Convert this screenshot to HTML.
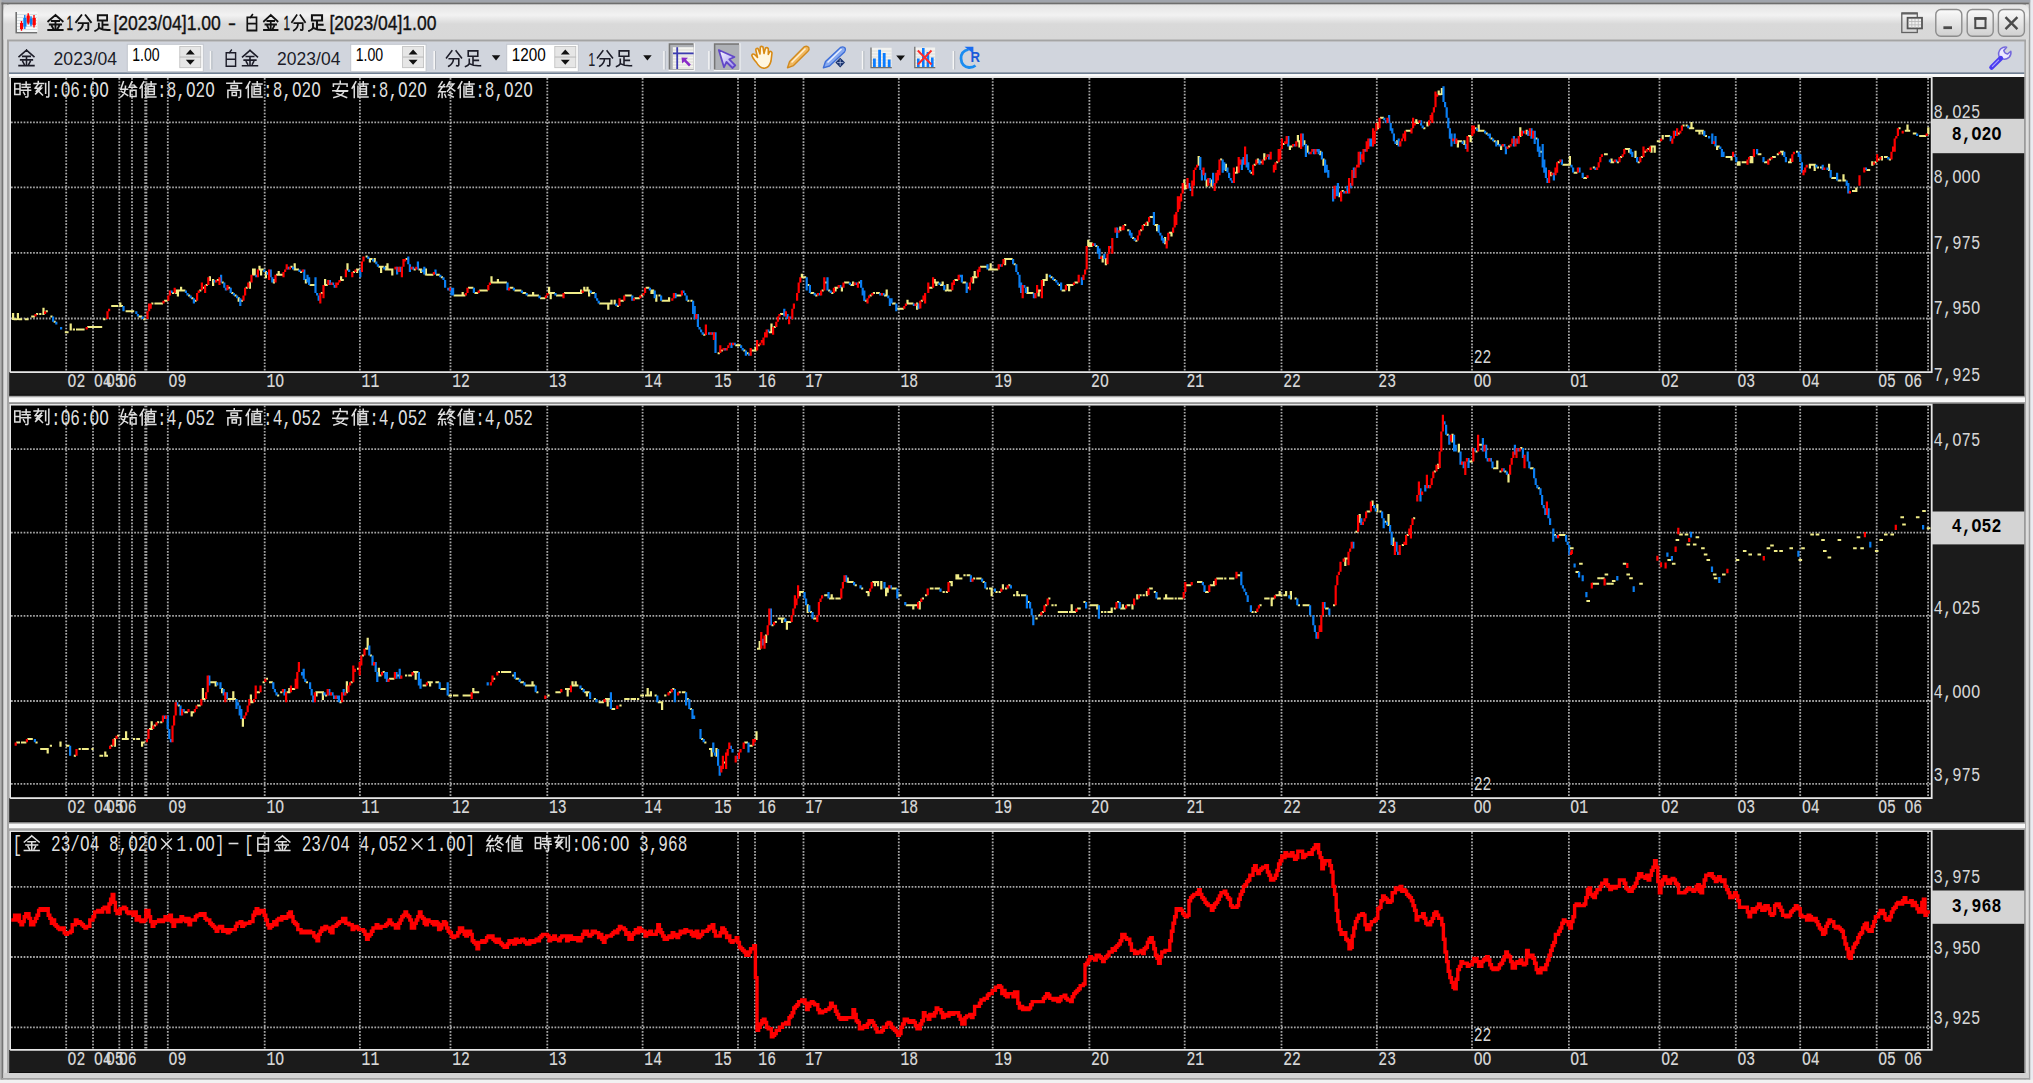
<!DOCTYPE html>
<html><head><meta charset="utf-8"><title>chart</title>
<style>html,body{margin:0;padding:0;width:2033px;height:1083px;overflow:hidden;background:#c8c8c8;font-family:"Liberation Sans",sans-serif;}</style>
</head><body>
<svg width="2033" height="1083" viewBox="0 0 2033 1083" style="display:block">
<defs>
<linearGradient id="tg" x1="0" y1="0" x2="0" y2="1"><stop offset="0" stop-color="#f6f6f6"/><stop offset="0.45" stop-color="#ececec"/><stop offset="1" stop-color="#d9d9d9"/></linearGradient>
<linearGradient id="bg" x1="0" y1="0" x2="0" y2="1"><stop offset="0" stop-color="#fbfbfb"/><stop offset="1" stop-color="#cfcfcf"/></linearGradient>
<linearGradient id="pg" x1="0" y1="0" x2="1" y2="1"><stop offset="0" stop-color="#ffffff"/><stop offset="1" stop-color="#9a8cf0"/></linearGradient>
</defs>
<rect x="0" y="0" width="2033" height="1083" fill="#c8c8c8"/>
<rect x="0" y="0" width="2033" height="2.5" fill="#a0a4ac"/>
<rect x="0" y="0" width="1.5" height="1083" fill="#b0b0b0"/>
<rect x="1.5" y="2.5" width="2" height="1079" fill="#747474"/>
<rect x="1.5" y="2.5" width="2028" height="2" fill="#6e6e6e"/>
<rect x="3.5" y="4.5" width="3.5" height="1075" fill="#dcdcdc"/>
<rect x="7" y="40" width="2" height="1040" fill="#a6a6a6"/>
<rect x="2024.2" y="40" width="1.8" height="1042" fill="#a8a8a8"/>
<rect x="2026" y="4.5" width="2.8" height="1078" fill="#dcdcdc"/>
<rect x="2028.8" y="2.5" width="1.6" height="1080" fill="#a0a0a0"/>
<rect x="2030.4" y="0" width="2.6" height="1083" fill="#e8ebf0"/>
<rect x="3.5" y="1073" width="2025" height="5" fill="#d2d2d2"/>
<rect x="2" y="1078" width="2028" height="1.8" fill="#a0a0a0"/>
<rect x="0" y="1079.8" width="2033" height="3.2" fill="#f2f2f2"/>
<linearGradient id="tg2" x1="0" y1="4.5" x2="0" y2="40" gradientUnits="userSpaceOnUse"><stop offset="0" stop-color="#e4e4e4"/><stop offset="0.3" stop-color="#f2f2f2"/><stop offset="0.55" stop-color="#d9d9d9"/><stop offset="0.96" stop-color="#d8d8d8"/><stop offset="1" stop-color="#e0e0e0"/></linearGradient>
<path d="M3.5,39.5 V11 Q3.5,4.5 10,4.5 H2022 Q2028.8,4.5 2028.8,11 V39.5 Z" fill="url(#tg2)"/>
<rect x="7" y="39.6" width="2019" height="2" fill="#a4a4a4"/>
<rect x="15.5" y="11.6" width="22" height="22" fill="#f6f8f8"/>
<line x1="17" y1="14.5" x2="37" y2="14.5" stroke="#d6dde0" stroke-width="1"/>
<line x1="17" y1="17.5" x2="37" y2="17.5" stroke="#d6dde0" stroke-width="1"/>
<line x1="17" y1="20.5" x2="37" y2="20.5" stroke="#d6dde0" stroke-width="1"/>
<line x1="17" y1="23.5" x2="37" y2="23.5" stroke="#d6dde0" stroke-width="1"/>
<line x1="17" y1="26.5" x2="37" y2="26.5" stroke="#d6dde0" stroke-width="1"/>
<line x1="17" y1="29.5" x2="37" y2="29.5" stroke="#d6dde0" stroke-width="1"/>
<path d="M16.2,12 V32.8 H37.2" fill="none" stroke="#707070" stroke-width="1.6"/>
<path d="M21.5,21 V30.7 M28.2,13.3 V24.6 M34,15 V27.4" stroke="#ff0000" stroke-width="1.4"/>
<path d="M24.8,15 V29 M31,16.3 V26.3" stroke="#0a7ef0" stroke-width="1.4"/>
<path d="M20,23 h3.2 v6 h-3.2z M26.6,15.5 h3.2 v7.2 h-3.2z M32.4,18 h3.4 v7.2 h-3.4z" fill="#ff0000"/>
<path d="M23.3,18 h3.2 v8.5 h-3.2z M29.7,18.5 h2.7 v6 h-2.7z" fill="#0a7ef0"/>
<path transform="translate(47.2,14.2) scale(1.031,1.050)" d="M8,0.8 L1,6.8 M8,0.8 L15,6.8 M4.5,6.5 H11.5 M2.5,9.8 H13.5 M1,15 H15 M8,6.5 V15 M4.5,11.3 L5.8,13.6 M11.5,11.3 L10.2,13.6" fill="none" stroke="#111111" stroke-width="1.80" stroke-linecap="square"/>
<text x="66.5" y="29.5" font-family="Liberation Sans" font-size="19.5" font-weight="normal" fill="#111111" textLength="6.5" lengthAdjust="spacingAndGlyphs" stroke="#111111" stroke-width="0.35">1</text>
<path transform="translate(75,14.2) scale(1.062,1.050)" d="M6,1 L1,7.5 M10,1 L15,7.5 M3.5,8.5 H12.5 V14 Q12.5,15.5 10.5,15 M7.5,8.5 Q7.5,13 3,15.5" fill="none" stroke="#111111" stroke-width="1.80" stroke-linecap="square"/>
<path transform="translate(94.2,14.2) scale(1.031,1.050)" d="M3.5,1 H12.5 V6 H3.5 Z M8,6 V14 M8,10 H13 M4.5,9 V13 Q3.5,15 1,15.8 M4.5,13 Q9,15.5 15,15" fill="none" stroke="#111111" stroke-width="1.80" stroke-linecap="square"/>
<text x="113.4" y="29.8" font-family="Liberation Sans" font-size="19.5" font-weight="normal" fill="#111111" textLength="107.5" lengthAdjust="spacingAndGlyphs" stroke="#111111" stroke-width="0.35">[2023/04]1.00</text>
<text x="228" y="29.5" font-family="Liberation Sans" font-size="19.5" font-weight="normal" fill="#111111" textLength="8" lengthAdjust="spacingAndGlyphs" stroke="#111111" stroke-width="0.35">-</text>
<path transform="translate(244.5,14.2) scale(0.925,1.050)" d="M8.5,0.5 L6.5,3 M3,3 H13 V15.5 H3 Z M3,9 H13" fill="none" stroke="#111111" stroke-width="1.80" stroke-linecap="square"/>
<path transform="translate(263,14.2) scale(0.969,1.050)" d="M8,0.8 L1,6.8 M8,0.8 L15,6.8 M4.5,6.5 H11.5 M2.5,9.8 H13.5 M1,15 H15 M8,6.5 V15 M4.5,11.3 L5.8,13.6 M11.5,11.3 L10.2,13.6" fill="none" stroke="#111111" stroke-width="1.80" stroke-linecap="square"/>
<text x="283.5" y="29.5" font-family="Liberation Sans" font-size="19.5" font-weight="normal" fill="#111111" textLength="6.5" lengthAdjust="spacingAndGlyphs" stroke="#111111" stroke-width="0.35">1</text>
<path transform="translate(291,14.2) scale(0.938,1.050)" d="M6,1 L1,7.5 M10,1 L15,7.5 M3.5,8.5 H12.5 V14 Q12.5,15.5 10.5,15 M7.5,8.5 Q7.5,13 3,15.5" fill="none" stroke="#111111" stroke-width="1.80" stroke-linecap="square"/>
<path transform="translate(308,14.2) scale(1.125,1.050)" d="M3.5,1 H12.5 V6 H3.5 Z M8,6 V14 M8,10 H13 M4.5,9 V13 Q3.5,15 1,15.8 M4.5,13 Q9,15.5 15,15" fill="none" stroke="#111111" stroke-width="1.80" stroke-linecap="square"/>
<text x="329.4" y="29.8" font-family="Liberation Sans" font-size="19.5" font-weight="normal" fill="#111111" textLength="107" lengthAdjust="spacingAndGlyphs" stroke="#111111" stroke-width="0.35">[2023/04]1.00</text>
<g fill="none" stroke="#626262">
<rect x="1901.8" y="13" width="15.5" height="19.5" stroke-width="1.3"/><line x1="1901.8" y1="13.5" x2="1917.3" y2="13.5" stroke-width="2"/>
</g>
<rect x="1907.6" y="17.8" width="14.4" height="10.6" fill="#f0f0f0" stroke="#555" stroke-width="1.8"/>
<path d="M1908.5,21.5 H1921 M1908.5,24.8 H1921 M1911.8,19 V28 M1915,19 V28 M1918.3,19 V28" stroke="#b8b8b8" stroke-width="0.8"/>
<rect x="1935.8" y="9.5" width="26" height="26.8" rx="5" fill="url(#bg)" stroke="#8c8c8c" stroke-width="1.4"/>
<rect x="1967.2" y="9.5" width="26" height="26.8" rx="5" fill="url(#bg)" stroke="#8c8c8c" stroke-width="1.4"/>
<rect x="1998.4" y="9.5" width="26" height="26.8" rx="5" fill="url(#bg)" stroke="#8c8c8c" stroke-width="1.4"/>
<rect x="1943.4" y="26.3" width="8.6" height="2.8" fill="#4a4a4a"/>
<rect x="1975.3" y="18.3" width="10.2" height="9.8" fill="none" stroke="#4a4a4a" stroke-width="2"/><rect x="1974.4" y="17.2" width="12" height="2.6" fill="#4a4a4a"/>
<path d="M2005.5,17.2 L2017.4,29.2 M2017.4,17.2 L2005.5,29.2" stroke="#4a4a4a" stroke-width="2.4"/>
<rect x="9" y="41.6" width="2015.2" height="31" fill="#d1d5dd"/>
<rect x="9" y="72.4" width="2015.2" height="1.6" fill="#6f7f92"/>
<rect x="9" y="74" width="2015.2" height="3" fill="#fbfbfb"/>
<path transform="translate(18,49.2) scale(1.062,1.094)" d="M8,0.8 L1,6.8 M8,0.8 L15,6.8 M4.5,6.5 H11.5 M2.5,9.8 H13.5 M1,15 H15 M8,6.5 V15 M4.5,11.3 L5.8,13.6 M11.5,11.3 L10.2,13.6" fill="none" stroke="#1c1c28" stroke-width="1.50" stroke-linecap="square"/>
<text x="53.6" y="65.2" font-family="Liberation Sans" font-size="18.5" font-weight="normal" fill="#1c1c28" textLength="63.5" lengthAdjust="spacingAndGlyphs">2023/04</text>
<rect x="127.3" y="44.3" width="76" height="27.4" fill="#ffffff" stroke="#c2c6ce" stroke-width="1"/>
<rect x="179.8" y="46.5" width="21" height="10.5" fill="#e6e6e6" stroke="#bdbdbd" stroke-width="0.8"/>
<rect x="179.8" y="57.2" width="21" height="10.5" fill="#e6e6e6" stroke="#bdbdbd" stroke-width="0.8"/>
<path d="M185.8,54.6 L190.3,49.6 L194.8,54.6 Z M185.8,59.8 L190.3,64.8 L194.8,59.8 Z" fill="#111"/>
<text x="132.3" y="61.4" font-family="Liberation Sans" font-size="18" font-weight="normal" fill="#000" textLength="27.4" lengthAdjust="spacingAndGlyphs">1.00</text>
<rect x="209.8" y="51" width="1.6" height="18.5" fill="#f6f6f6"/><rect x="211.4" y="51" width="1" height="18.5" fill="#b4b8c0"/>
<path transform="translate(223.4,49.5) scale(0.938,1.081)" d="M8.5,0.5 L6.5,3 M3,3 H13 V15.5 H3 Z M3,9 H13" fill="none" stroke="#1c1c28" stroke-width="1.50" stroke-linecap="square"/>
<path transform="translate(241.5,49.5) scale(1.062,1.081)" d="M8,0.8 L1,6.8 M8,0.8 L15,6.8 M4.5,6.5 H11.5 M2.5,9.8 H13.5 M1,15 H15 M8,6.5 V15 M4.5,11.3 L5.8,13.6 M11.5,11.3 L10.2,13.6" fill="none" stroke="#1c1c28" stroke-width="1.50" stroke-linecap="square"/>
<text x="277.1" y="65.2" font-family="Liberation Sans" font-size="18.5" font-weight="normal" fill="#1c1c28" textLength="63.3" lengthAdjust="spacingAndGlyphs">2023/04</text>
<rect x="350.7" y="44.3" width="75.4" height="27.4" fill="#ffffff" stroke="#c2c6ce" stroke-width="1"/>
<rect x="402.6" y="46.5" width="21" height="10.5" fill="#e6e6e6" stroke="#bdbdbd" stroke-width="0.8"/>
<rect x="402.6" y="57.2" width="21" height="10.5" fill="#e6e6e6" stroke="#bdbdbd" stroke-width="0.8"/>
<path d="M408.6,54.6 L413.1,49.6 L417.6,54.6 Z M408.6,59.8 L413.1,64.8 L417.6,59.8 Z" fill="#111"/>
<text x="355.7" y="61.4" font-family="Liberation Sans" font-size="18" font-weight="normal" fill="#000" textLength="27.5" lengthAdjust="spacingAndGlyphs">1.00</text>
<rect x="433.4" y="51" width="1.6" height="18.5" fill="#f6f6f6"/><rect x="435" y="51" width="1" height="18.5" fill="#b4b8c0"/>
<path transform="translate(445.5,49.8) scale(1.062,1.062)" d="M6,1 L1,7.5 M10,1 L15,7.5 M3.5,8.5 H12.5 V14 Q12.5,15.5 10.5,15 M7.5,8.5 Q7.5,13 3,15.5" fill="none" stroke="#1c1c28" stroke-width="1.50" stroke-linecap="square"/>
<path transform="translate(464.5,49.8) scale(1.062,1.062)" d="M3.5,1 H12.5 V6 H3.5 Z M8,6 V14 M8,10 H13 M4.5,9 V13 Q3.5,15 1,15.8 M4.5,13 Q9,15.5 15,15" fill="none" stroke="#1c1c28" stroke-width="1.50" stroke-linecap="square"/>
<path d="M491.8,55.2 H500.3 L496,60.5 Z" fill="#111"/>
<rect x="506.7" y="44.3" width="71.6" height="27.4" fill="#ffffff" stroke="#c2c6ce" stroke-width="1"/>
<rect x="554.8" y="46.5" width="21" height="10.5" fill="#e6e6e6" stroke="#bdbdbd" stroke-width="0.8"/>
<rect x="554.8" y="57.2" width="21" height="10.5" fill="#e6e6e6" stroke="#bdbdbd" stroke-width="0.8"/>
<path d="M560.8,54.6 L565.3,49.6 L569.8,54.6 Z M560.8,59.8 L565.3,64.8 L569.8,59.8 Z" fill="#111"/>
<text x="511.7" y="61.4" font-family="Liberation Sans" font-size="18" font-weight="normal" fill="#000" textLength="34" lengthAdjust="spacingAndGlyphs">1200</text>
<text x="588.2" y="65.5" font-family="Liberation Sans" font-size="18.5" font-weight="normal" fill="#1c1c28" textLength="7" lengthAdjust="spacingAndGlyphs">1</text>
<path transform="translate(596.5,49.8) scale(1.062,1.062)" d="M6,1 L1,7.5 M10,1 L15,7.5 M3.5,8.5 H12.5 V14 Q12.5,15.5 10.5,15 M7.5,8.5 Q7.5,13 3,15.5" fill="none" stroke="#1c1c28" stroke-width="1.50" stroke-linecap="square"/>
<path transform="translate(615.5,49.8) scale(1.062,1.062)" d="M3.5,1 H12.5 V6 H3.5 Z M8,6 V14 M8,10 H13 M4.5,9 V13 Q3.5,15 1,15.8 M4.5,13 Q9,15.5 15,15" fill="none" stroke="#1c1c28" stroke-width="1.50" stroke-linecap="square"/>
<path d="M643.2,55.2 H651.7 L647.4,60.5 Z" fill="#111"/>
<rect x="663.2" y="51" width="1.6" height="18.5" fill="#f6f6f6"/><rect x="664.8" y="51" width="1" height="18.5" fill="#b4b8c0"/>
<rect x="668.6" y="43.2" width="26.2" height="27.6" fill="#ffffff"/>
<rect x="668.6" y="43.2" width="25" height="26.4" fill="#767676"/>
<rect x="670.2" y="44.8" width="23.4" height="24.8" fill="#aeb1b6"/>
<rect x="672.8" y="47.2" width="20.8" height="21.8" fill="#f4f4f0"/>
<line x1="673" y1="50" x2="693.5" y2="50" stroke="#d4d4cc" stroke-width="0.8"/>
<line x1="673" y1="53" x2="693.5" y2="53" stroke="#d4d4cc" stroke-width="0.8"/>
<line x1="673" y1="56" x2="693.5" y2="56" stroke="#d4d4cc" stroke-width="0.8"/>
<line x1="673" y1="59" x2="693.5" y2="59" stroke="#d4d4cc" stroke-width="0.8"/>
<line x1="673" y1="62" x2="693.5" y2="62" stroke="#d4d4cc" stroke-width="0.8"/>
<line x1="673" y1="65" x2="693.5" y2="65" stroke="#d4d4cc" stroke-width="0.8"/>
<line x1="673" y1="68" x2="693.5" y2="68" stroke="#d4d4cc" stroke-width="0.8"/>
<rect x="676.3" y="47.2" width="1.8" height="21.8" fill="#3c3cb0"/><rect x="673" y="52.5" width="20.6" height="1.8" fill="#3c3cb0"/>
<path d="M681.5,57.5 L688,57.8 L686,59.8 L690.8,64.6 L689,66.4 L684.2,61.6 L682.2,63.6 Z" fill="#8a2ac8"/>
<rect x="708.2" y="51" width="1.6" height="18.5" fill="#f6f6f6"/><rect x="709.8" y="51" width="1" height="18.5" fill="#b4b8c0"/>
<rect x="713.8" y="43.2" width="26.6" height="27.6" fill="#ffffff"/>
<rect x="713.8" y="43.2" width="25.4" height="26.4" fill="#767676"/>
<rect x="715.4" y="44.8" width="23.8" height="24.8" fill="#aeb1b6"/>
<path d="M718.8,50 L734.5,57 L729.3,59.3 L735.3,65.3 L732.5,68 L726.5,62 L724,67.2 Z" fill="url(#pg)" stroke="#6248c8" stroke-width="1.8" stroke-linejoin="round"/>
<path d="M756.5,62.5 Q752.5,58 751.8,55.2 Q752.5,53 755,54.8 L757.5,57.5 L755.8,50 Q755.8,48 758,48.5 L760,54 L760.3,47 Q761.3,45.8 763,47 L764,53.5 L765.5,48 Q767,47 768.3,48.5 L768.3,54.5 L769.8,51.5 Q771.5,51 772,53 L771,61 Q769.5,67.5 764.5,68.2 Q759.5,68.2 756.5,62.5 Z" fill="#fff6e0" stroke="#d88a14" stroke-width="1.6" stroke-linejoin="round"/>
<path d="M787.5,67.8 L789.6,61.5 L804.5,46.6 Q807.4,45.6 808.8,47.6 Q809.6,50 808.2,51 L793.5,65.6 Z" fill="#f0b860" stroke="#d08a20" stroke-width="1.4" stroke-linejoin="round"/>
<path d="M791.5,62.5 L805.5,48.5" stroke="#fff0d0" stroke-width="1.6"/>
<path d="M823.4,67.8 L825.5,61.5 L840.5,47.5 Q843.5,46 845.2,48.2 Q846,50.5 844.5,52 L829.5,66 Z" fill="#88aaf0" stroke="#3f6fd8" stroke-width="1.4" stroke-linejoin="round"/>
<path d="M827.5,62.5 L841.5,49" stroke="#e6eeff" stroke-width="1.6"/>
<path d="M840.2,57.8 L845,62.6 L840.2,67.4 L835.4,62.6 Z" fill="#16306c"/><path d="M837,62.6 H843.4 M840.2,59.4 V65.8" stroke="#c8d4f0" stroke-width="0.7"/>
<rect x="861.8" y="51" width="1.6" height="18.5" fill="#f6f6f6"/><rect x="863.4" y="51" width="1" height="18.5" fill="#b4b8c0"/>
<rect x="870.6" y="47.8" width="21" height="20" fill="#f2f2f0"/>
<line x1="871" y1="51" x2="891.5" y2="51" stroke="#d8d8d2" stroke-width="0.8"/>
<line x1="871" y1="54" x2="891.5" y2="54" stroke="#d8d8d2" stroke-width="0.8"/>
<line x1="871" y1="57" x2="891.5" y2="57" stroke="#d8d8d2" stroke-width="0.8"/>
<line x1="871" y1="60" x2="891.5" y2="60" stroke="#d8d8d2" stroke-width="0.8"/>
<line x1="871" y1="63" x2="891.5" y2="63" stroke="#d8d8d2" stroke-width="0.8"/>
<line x1="871" y1="66" x2="891.5" y2="66" stroke="#d8d8d2" stroke-width="0.8"/>
<path d="M871,47.5 V67.6 H891.8" fill="none" stroke="#6e6e6e" stroke-width="1.3"/>
<path d="M873,58.5 h2.8 v8.5 h-2.8z M878.2,49.8 h2.8 v17.2 h-2.8z M882.8,52.9 h2.8 v14.1 h-2.8z M887.8,59.5 h2.8 v7.5 h-2.8z" fill="#0a7cff"/>
<path d="M896.2,55.5 H905 L900.6,60.8 Z" fill="#111"/>
<rect x="914.5" y="47.5" width="20.6" height="20.3" fill="#f2f2f0"/>
<line x1="915" y1="51" x2="935" y2="51" stroke="#d8d8d2" stroke-width="0.8"/>
<line x1="915" y1="54" x2="935" y2="54" stroke="#d8d8d2" stroke-width="0.8"/>
<line x1="915" y1="57" x2="935" y2="57" stroke="#d8d8d2" stroke-width="0.8"/>
<line x1="915" y1="60" x2="935" y2="60" stroke="#d8d8d2" stroke-width="0.8"/>
<line x1="915" y1="63" x2="935" y2="63" stroke="#d8d8d2" stroke-width="0.8"/>
<line x1="915" y1="66" x2="935" y2="66" stroke="#d8d8d2" stroke-width="0.8"/>
<path d="M914.8,46.8 V67.6 H935.3" fill="none" stroke="#6e6e6e" stroke-width="1.3"/>
<path d="M917,58.5 h2.6 v8.5 h-2.6z M922,48 h2.6 v19 h-2.6z M926.6,52 h2.6 v15 h-2.6z M931,57.5 h2.6 v9.5 h-2.6z" fill="#0a7cff"/>
<path d="M917.8,50.5 L931.5,64.5 M931.5,50.5 L917.8,64.5" stroke="#ff2a2a" stroke-width="1.9"/>
<rect x="952.6" y="51" width="1.6" height="18.5" fill="#f6f6f6"/><rect x="954.2" y="51" width="1" height="18.5" fill="#b4b8c0"/>
<path d="M968.5,49.5 Q961,51 961,58.5 Q961.5,66.5 969,67.5 Q973,67.6 975.5,65.5" fill="none" stroke="#1a8cf0" stroke-width="2.8"/>
<path d="M964.5,46.8 H973.4 V53.5 Z" fill="#1a6cf0"/>
<text x="970.6" y="62.4" font-family="Liberation Sans" font-size="14.5" font-weight="bold" fill="#1a5ad8" textLength="9.5" lengthAdjust="spacingAndGlyphs">R</text>
<path d="M1999.5,57.5 Q1997.2,52.5 2000.8,48.8 Q2003.6,46.4 2006.6,47.2 L2003.8,50.6 Q2004.6,53.6 2007.6,54 L2010.8,51.2 Q2011.6,54.8 2009,57.4 Q2006,60 2002,58.8 Z" fill="#ece8ff" stroke="#7468dc" stroke-width="1.5" stroke-linejoin="round"/>
<path d="M1991.6,67.4 L2000.8,58.2" stroke="#4a3cf0" stroke-width="4.8" stroke-linecap="round"/>
<path d="M1992.4,66.4 L1998.6,60.2" stroke="#a8a0ff" stroke-width="1.2" stroke-linecap="round"/>
<rect x="9.2" y="77" width="2015.1" height="318.6" fill="#1b1b1b"/>
<rect x="9.2" y="394.6" width="2015.1" height="1" fill="#0c0c0c"/>
<rect x="11" y="78" width="1919.8" height="293.3" fill="#000000"/>
<path d="M10.1,372.3 V77.1 H1931.7 V372.2 H10.1" fill="none" stroke="#e6e6e6" stroke-width="1.8"/>
<path d="M66.2,78 V371.3 M93,78 V371.3 M119.3,78 V371.3 M132,78 V371.3 M145.2,78 V371.3 M167.8,78 V371.3 M264.7,78 V371.3 M359.9,78 V371.3 M450.5,78 V371.3 M547.3,78 V371.3 M642.6,78 V371.3 M738,78 V371.3 M755,78 V371.3 M803.5,78 V371.3 M898.8,78 V371.3 M992.7,78 V371.3 M1089.4,78 V371.3 M1184.7,78 V371.3 M1281.5,78 V371.3 M1376.8,78 V371.3 M1472,78 V371.3 M1568.9,78 V371.3 M1659.5,78 V371.3 M1735.8,78 V371.3 M1800.2,78 V371.3 M1876.7,78 V371.3 M1928.1,78 V371.3 M11,122.4 H1930.8 M11,187.4 H1930.8 M11,252.9 H1930.8 M11,318.5 H1930.8" fill="none" stroke="#a6a6a6" stroke-width="1.8" stroke-dasharray="1.7 1.46"/>
<path d="M146.6,78 V371.3" fill="none" stroke="#a6a6a6" stroke-width="1.5" stroke-dasharray="1.7 1.46"/>
<path d="M12,312.9h2.2v7.2h-2.2zM13.6,318.2h2.2v2h-2.2zM15.2,318.2h2.2v2h-2.2zM16.8,312.9h2.2v7.2h-2.2zM18.4,318.2h2.2v2h-2.2zM20,318.2h2.2v2h-2.2zM24.8,318.2h2.2v2h-2.2zM26.4,318.2h2.2v2h-2.2zM31.2,315.5h2.2v2h-2.2zM32.8,315.5h2.2v2h-2.2zM36,312.9h2.2v2h-2.2zM39.2,312.9h2.2v2h-2.2zM42.4,307.7h2.2v7.2h-2.2zM45.6,310.3h2.2v2h-2.2zM50.4,315.5h2.2v2h-2.2zM53.6,320.8h2.2v2h-2.2zM64.8,331.2h2.2v2h-2.2zM66.4,331.2h2.2v2h-2.2zM69.6,323.4h2.2v7.2h-2.2zM72.8,328.6h2.2v2h-2.2zM76,328.6h2.2v2h-2.2zM77.6,328.6h2.2v2h-2.2zM79.2,328.6h2.2v2h-2.2zM80.8,328.6h2.2v2h-2.2zM82.4,328.6h2.2v2h-2.2zM87.2,326h2.2v2h-2.2zM88.8,326h2.2v2h-2.2zM90.4,326h2.2v2h-2.2zM92,326h2.2v2h-2.2zM93.6,326h2.2v2h-2.2zM95.2,326h2.2v2h-2.2zM96.8,326h2.2v2h-2.2zM98.4,326h2.2v2h-2.2zM100,326h2.2v2h-2.2zM103.2,318.2h2.2v2h-2.2zM111.2,305.1h2.2v2h-2.2zM112.8,305.1h2.2v2h-2.2zM114.4,305.1h2.2v2h-2.2zM116,305.1h2.2v2h-2.2zM119.2,302.5h2.2v4.6h-2.2zM120.8,305.1h2.2v2h-2.2zM125.6,310.3h2.2v2h-2.2zM127.2,310.3h2.2v2h-2.2zM128.8,310.3h2.2v2h-2.2zM130.4,310.3h2.2v2h-2.2zM132,310.3h2.2v2h-2.2zM138.4,315.5h2.2v2h-2.2zM140,315.5h2.2v2h-2.2zM143.2,318.2h2.2v2h-2.2zM151.2,302.5h2.2v2h-2.2zM154.4,302.5h2.2v2h-2.2zM156,302.5h2.2v2h-2.2zM157.6,302.5h2.2v2h-2.2zM159.2,302.5h2.2v2h-2.2zM160.8,302.5h2.2v2h-2.2zM164,299.8h2.2v2h-2.2zM165.6,299.8h2.2v2h-2.2zM172,292h2.2v2h-2.2zM175.2,289.4h2.2v4.6h-2.2zM176.8,289.4h2.2v7.2h-2.2zM178.4,289.4h2.2v2h-2.2zM180,286.8h2.2v4.6h-2.2zM181.6,289.4h2.2v2h-2.2zM183.2,289.4h2.2v2h-2.2zM188,294.6h2.2v2h-2.2zM191.2,297.2h2.2v2h-2.2zM194.4,299.8h2.2v2h-2.2zM199.2,289.4h2.2v2h-2.2zM202.4,286.8h2.2v2h-2.2zM205.6,284.1h2.2v2h-2.2zM208.8,276.3h2.2v4.6h-2.2zM212,278.9h2.2v7.2h-2.2zM216.8,278.9h2.2v2h-2.2zM221.6,281.5h2.2v2h-2.2zM228,286.8h2.2v2h-2.2zM231.2,292h2.2v2h-2.2zM234.4,294.6h2.2v2h-2.2zM237.6,297.2h2.2v4.6h-2.2zM240.8,299.8h2.2v2h-2.2zM245.6,286.8h2.2v2h-2.2zM248.8,281.5h2.2v7.2h-2.2zM252,268.4h2.2v7.2h-2.2zM253.6,268.4h2.2v7.2h-2.2zM258.4,265.8h2.2v4.6h-2.2zM260,268.4h2.2v7.2h-2.2zM261.6,268.4h2.2v2h-2.2zM264.8,271.1h2.2v7.2h-2.2zM272.8,278.9h2.2v4.6h-2.2zM276,273.7h2.2v2h-2.2zM277.6,271.1h2.2v4.6h-2.2zM279.2,273.7h2.2v2h-2.2zM280.8,273.7h2.2v2h-2.2zM290.4,265.8h2.2v2h-2.2zM293.6,263.2h2.2v7.2h-2.2zM295.2,268.4h2.2v2h-2.2zM296.8,268.4h2.2v2h-2.2zM300,271.1h2.2v2h-2.2zM304.8,278.9h2.2v4.6h-2.2zM309.6,284.1h2.2v2h-2.2zM311.2,284.1h2.2v2h-2.2zM312.8,284.1h2.2v2h-2.2zM320.8,292h2.2v2h-2.2zM324,278.9h2.2v7.2h-2.2zM325.6,284.1h2.2v2h-2.2zM340,276.3h2.2v4.6h-2.2zM341.6,278.9h2.2v2h-2.2zM346.4,263.2h2.2v7.2h-2.2zM352.8,271.1h2.2v2h-2.2zM356,268.4h2.2v4.6h-2.2zM357.6,268.4h2.2v2h-2.2zM365.6,255.4h2.2v2h-2.2zM368.8,258h2.2v4.6h-2.2zM370.4,258h2.2v2h-2.2zM373.6,258h2.2v4.6h-2.2zM378.4,265.8h2.2v2h-2.2zM380,265.8h2.2v7.2h-2.2zM381.6,265.8h2.2v2h-2.2zM384.8,265.8h2.2v4.6h-2.2zM386.4,263.2h2.2v7.2h-2.2zM388,268.4h2.2v2h-2.2zM389.6,268.4h2.2v2h-2.2zM391.2,268.4h2.2v7.2h-2.2zM405.6,258h2.2v2h-2.2zM413.6,268.4h2.2v2h-2.2zM418.4,268.4h2.2v2h-2.2zM420,268.4h2.2v4.6h-2.2zM424.8,268.4h2.2v7.2h-2.2zM426.4,273.7h2.2v2h-2.2zM428,273.7h2.2v2h-2.2zM429.6,273.7h2.2v2h-2.2zM431.2,273.7h2.2v2h-2.2zM436,273.7h2.2v2h-2.2zM437.6,273.7h2.2v2h-2.2zM440.8,276.3h2.2v2h-2.2zM453.6,294.6h2.2v2h-2.2zM455.2,294.6h2.2v2h-2.2zM456.8,294.6h2.2v2h-2.2zM458.4,294.6h2.2v2h-2.2zM460,294.6h2.2v2h-2.2zM461.6,292h2.2v4.6h-2.2zM463.2,294.6h2.2v2h-2.2zM468,286.8h2.2v2h-2.2zM469.6,286.8h2.2v2h-2.2zM471.2,286.8h2.2v2h-2.2zM474.4,292h2.2v2h-2.2zM476,292h2.2v2h-2.2zM479.2,289.4h2.2v2h-2.2zM480.8,289.4h2.2v2h-2.2zM482.4,289.4h2.2v2h-2.2zM484,289.4h2.2v2h-2.2zM485.6,289.4h2.2v2h-2.2zM490.4,276.3h2.2v7.2h-2.2zM492,281.5h2.2v2h-2.2zM493.6,281.5h2.2v2h-2.2zM495.2,281.5h2.2v2h-2.2zM496.8,278.9h2.2v4.6h-2.2zM498.4,281.5h2.2v2h-2.2zM500,281.5h2.2v2h-2.2zM501.6,281.5h2.2v2h-2.2zM503.2,281.5h2.2v2h-2.2zM504.8,281.5h2.2v2h-2.2zM509.6,286.8h2.2v2h-2.2zM511.2,286.8h2.2v2h-2.2zM514.4,289.4h2.2v2h-2.2zM516,289.4h2.2v2h-2.2zM517.6,289.4h2.2v2h-2.2zM519.2,289.4h2.2v2h-2.2zM522.4,292h2.2v2h-2.2zM524,292h2.2v2h-2.2zM527.2,294.6h2.2v2h-2.2zM528.8,294.6h2.2v2h-2.2zM530.4,294.6h2.2v2h-2.2zM532,292h2.2v4.6h-2.2zM533.6,294.6h2.2v2h-2.2zM535.2,294.6h2.2v2h-2.2zM536.8,294.6h2.2v2h-2.2zM540,297.2h2.2v2h-2.2zM541.6,297.2h2.2v2h-2.2zM543.2,297.2h2.2v2h-2.2zM548,286.8h2.2v7.2h-2.2zM549.6,292h2.2v7.2h-2.2zM551.2,292h2.2v2h-2.2zM552.8,292h2.2v2h-2.2zM556,294.6h2.2v2h-2.2zM557.6,294.6h2.2v2h-2.2zM559.2,294.6h2.2v2h-2.2zM560.8,294.6h2.2v2h-2.2zM564,292h2.2v2h-2.2zM565.6,292h2.2v2h-2.2zM567.2,292h2.2v2h-2.2zM568.8,292h2.2v2h-2.2zM570.4,292h2.2v2h-2.2zM572,292h2.2v2h-2.2zM573.6,292h2.2v2h-2.2zM575.2,292h2.2v2h-2.2zM576.8,292h2.2v2h-2.2zM578.4,292h2.2v2h-2.2zM580,289.4h2.2v4.6h-2.2zM583.2,286.8h2.2v4.6h-2.2zM584.8,289.4h2.2v2h-2.2zM586.4,286.8h2.2v4.6h-2.2zM588,289.4h2.2v7.2h-2.2zM591.2,292h2.2v2h-2.2zM592.8,292h2.2v2h-2.2zM599.2,302.5h2.2v2h-2.2zM600.8,302.5h2.2v2h-2.2zM602.4,302.5h2.2v2h-2.2zM604,302.5h2.2v2h-2.2zM605.6,302.5h2.2v2h-2.2zM607.2,302.5h2.2v7.2h-2.2zM608.8,302.5h2.2v2h-2.2zM610.4,299.8h2.2v4.6h-2.2zM613.6,299.8h2.2v4.6h-2.2zM616.8,305.1h2.2v2h-2.2zM620,299.8h2.2v2h-2.2zM621.6,299.8h2.2v2h-2.2zM624.8,294.6h2.2v2h-2.2zM626.4,294.6h2.2v2h-2.2zM628,294.6h2.2v2h-2.2zM629.6,294.6h2.2v2h-2.2zM634.4,297.2h2.2v2h-2.2zM636,297.2h2.2v2h-2.2zM637.6,297.2h2.2v2h-2.2zM640.8,294.6h2.2v2h-2.2zM645.6,286.8h2.2v2h-2.2zM647.2,286.8h2.2v2h-2.2zM650.4,289.4h2.2v4.6h-2.2zM652,289.4h2.2v4.6h-2.2zM655.2,294.6h2.2v7.2h-2.2zM658.4,294.6h2.2v2h-2.2zM661.6,299.8h2.2v2h-2.2zM663.2,299.8h2.2v2h-2.2zM664.8,299.8h2.2v2h-2.2zM666.4,299.8h2.2v2h-2.2zM668,297.2h2.2v4.6h-2.2zM676,294.6h2.2v2h-2.2zM677.6,294.6h2.2v2h-2.2zM679.2,294.6h2.2v2h-2.2zM687.2,299.8h2.2v2h-2.2zM690.4,299.8h2.2v2h-2.2zM703.2,333.8h2.2v2h-2.2zM717.6,352.2h2.2v2h-2.2zM720.8,349.5h2.2v2h-2.2zM735.2,344.3h2.2v2h-2.2zM736.8,344.3h2.2v2h-2.2zM738.4,344.3h2.2v2h-2.2zM743.2,349.5h2.2v2h-2.2zM746.4,352.2h2.2v2h-2.2zM751.2,349.5h2.2v2h-2.2zM752.8,349.5h2.2v2h-2.2zM754.4,346.9h2.2v4.6h-2.2zM757.6,344.3h2.2v2h-2.2zM768.8,331.2h2.2v2h-2.2zM770.4,323.4h2.2v9.8h-2.2zM773.6,326h2.2v2h-2.2zM780,312.9h2.2v2h-2.2zM781.6,312.9h2.2v2h-2.2zM800.8,273.7h2.2v4.6h-2.2zM802.4,276.3h2.2v2h-2.2zM804,276.3h2.2v2h-2.2zM807.2,284.1h2.2v2h-2.2zM810.4,292h2.2v2h-2.2zM812,292h2.2v2h-2.2zM815.2,294.6h2.2v2h-2.2zM821.6,289.4h2.2v2h-2.2zM824.8,281.5h2.2v2h-2.2zM828,289.4h2.2v2h-2.2zM831.2,292h2.2v2h-2.2zM834.4,286.8h2.2v4.6h-2.2zM836,286.8h2.2v2h-2.2zM840.8,286.8h2.2v4.6h-2.2zM844,281.5h2.2v2h-2.2zM845.6,281.5h2.2v2h-2.2zM847.2,281.5h2.2v2h-2.2zM850.4,284.1h2.2v2h-2.2zM852,281.5h2.2v4.6h-2.2zM858.4,281.5h2.2v2h-2.2zM864.8,299.8h2.2v2h-2.2zM869.6,294.6h2.2v2h-2.2zM872.8,292h2.2v2h-2.2zM876,292h2.2v2h-2.2zM877.6,292h2.2v2h-2.2zM884,294.6h2.2v2h-2.2zM885.6,289.4h2.2v7.2h-2.2zM892,302.5h2.2v2h-2.2zM893.6,302.5h2.2v2h-2.2zM896.8,307.7h2.2v2h-2.2zM898.4,307.7h2.2v2h-2.2zM900,307.7h2.2v2h-2.2zM901.6,307.7h2.2v2h-2.2zM906.4,299.8h2.2v4.6h-2.2zM908,302.5h2.2v2h-2.2zM909.6,302.5h2.2v2h-2.2zM911.2,302.5h2.2v2h-2.2zM916,302.5h2.2v7.2h-2.2zM920.8,299.8h2.2v2h-2.2zM928.8,286.8h2.2v2h-2.2zM930.4,286.8h2.2v2h-2.2zM933.6,278.9h2.2v4.6h-2.2zM935.2,281.5h2.2v4.6h-2.2zM936.8,281.5h2.2v2h-2.2zM940,284.1h2.2v2h-2.2zM941.6,281.5h2.2v4.6h-2.2zM944.8,289.4h2.2v2h-2.2zM946.4,284.1h2.2v7.2h-2.2zM948,289.4h2.2v2h-2.2zM949.6,289.4h2.2v2h-2.2zM954.4,278.9h2.2v2h-2.2zM956,278.9h2.2v2h-2.2zM962.4,281.5h2.2v2h-2.2zM964,281.5h2.2v2h-2.2zM967.2,286.8h2.2v2h-2.2zM972,276.3h2.2v7.2h-2.2zM973.6,271.1h2.2v7.2h-2.2zM975.2,276.3h2.2v2h-2.2zM980,265.8h2.2v2h-2.2zM981.6,265.8h2.2v2h-2.2zM983.2,265.8h2.2v2h-2.2zM984.8,265.8h2.2v2h-2.2zM988,268.4h2.2v2h-2.2zM989.6,263.2h2.2v7.2h-2.2zM991.2,268.4h2.2v2h-2.2zM992.8,268.4h2.2v2h-2.2zM994.4,268.4h2.2v2h-2.2zM996,268.4h2.2v2h-2.2zM1004,258h2.2v7.2h-2.2zM1005.6,258h2.2v2h-2.2zM1007.2,258h2.2v2h-2.2zM1008.8,258h2.2v2h-2.2zM1010.4,258h2.2v2h-2.2zM1013.6,263.2h2.2v2h-2.2zM1026.4,286.8h2.2v7.2h-2.2zM1028,292h2.2v2h-2.2zM1029.6,292h2.2v2h-2.2zM1031.2,292h2.2v2h-2.2zM1037.6,289.4h2.2v7.2h-2.2zM1039.2,289.4h2.2v2h-2.2zM1042.4,278.9h2.2v7.2h-2.2zM1044,278.9h2.2v2h-2.2zM1045.6,273.7h2.2v7.2h-2.2zM1050.4,276.3h2.2v2h-2.2zM1053.6,278.9h2.2v2h-2.2zM1058.4,284.1h2.2v2h-2.2zM1061.6,289.4h2.2v2h-2.2zM1063.2,289.4h2.2v2h-2.2zM1066.4,284.1h2.2v2h-2.2zM1068,284.1h2.2v7.2h-2.2zM1069.6,284.1h2.2v2h-2.2zM1071.2,284.1h2.2v2h-2.2zM1074.4,281.5h2.2v2h-2.2zM1076,281.5h2.2v2h-2.2zM1087.2,239.7h2.2v7.2h-2.2zM1088.8,242.3h2.2v4.6h-2.2zM1090.4,242.3h2.2v4.6h-2.2zM1095.2,244.9h2.2v2h-2.2zM1101.6,255.4h2.2v7.2h-2.2zM1104.8,258h2.2v7.2h-2.2zM1119.2,226.6h2.2v4.6h-2.2zM1124,224h2.2v2h-2.2zM1127.2,229.2h2.2v2h-2.2zM1132,237.1h2.2v2h-2.2zM1135.2,239.7h2.2v2h-2.2zM1140,229.2h2.2v2h-2.2zM1143.2,224h2.2v2h-2.2zM1146.4,221.4h2.2v4.6h-2.2zM1149.6,216.1h2.2v2h-2.2zM1151.2,216.1h2.2v2h-2.2zM1154.4,224h2.2v2h-2.2zM1156,224h2.2v7.2h-2.2zM1164,237.1h2.2v7.2h-2.2zM1168.8,231.8h2.2v2h-2.2zM1170.4,231.8h2.2v4.6h-2.2zM1183.2,179.5h2.2v9.8h-2.2zM1184.8,184.7h2.2v4.6h-2.2zM1197.6,156h2.2v9.8h-2.2zM1205.6,179.5h2.2v7.2h-2.2zM1210.4,179.5h2.2v7.2h-2.2zM1220,158.6h2.2v2h-2.2zM1224.8,163.8h2.2v7.2h-2.2zM1234.4,171.7h2.2v2h-2.2zM1236,166.4h2.2v7.2h-2.2zM1250.4,171.7h2.2v2h-2.2zM1253.6,163.8h2.2v2h-2.2zM1256.8,158.6h2.2v4.6h-2.2zM1260,161.2h2.2v2h-2.2zM1263.2,153.3h2.2v7.2h-2.2zM1276,161.2h2.2v2h-2.2zM1282.4,142.9h2.2v2h-2.2zM1288.8,145.5h2.2v4.6h-2.2zM1290.4,145.5h2.2v2h-2.2zM1296.8,135h2.2v7.2h-2.2zM1298.4,140.3h2.2v7.2h-2.2zM1303.2,140.3h2.2v4.6h-2.2zM1306.4,145.5h2.2v7.2h-2.2zM1319.2,150.7h2.2v4.6h-2.2zM1322.4,158.6h2.2v7.2h-2.2zM1338.4,192.6h2.2v4.6h-2.2zM1341.6,190h2.2v2h-2.2zM1376.8,122h2.2v7.2h-2.2zM1380,116.7h2.2v2h-2.2zM1381.6,116.7h2.2v2h-2.2zM1396,140.3h2.2v4.6h-2.2zM1405.6,129.8h2.2v2h-2.2zM1407.2,129.8h2.2v2h-2.2zM1408.8,129.8h2.2v2h-2.2zM1415.2,119.3h2.2v4.6h-2.2zM1416.8,122h2.2v2h-2.2zM1423.2,127.2h2.2v2h-2.2zM1426.4,122h2.2v4.6h-2.2zM1437.6,90.6h2.2v4.6h-2.2zM1439.2,93.2h2.2v2h-2.2zM1440.8,87.9h2.2v7.2h-2.2zM1456.8,140.3h2.2v7.2h-2.2zM1458.4,140.3h2.2v2h-2.2zM1460,140.3h2.2v2h-2.2zM1463.2,140.3h2.2v4.6h-2.2zM1468,135h2.2v2h-2.2zM1469.6,135h2.2v7.2h-2.2zM1474.4,127.2h2.2v2h-2.2zM1477.6,124.6h2.2v7.2h-2.2zM1479.2,129.8h2.2v2h-2.2zM1480.8,129.8h2.2v2h-2.2zM1482.4,129.8h2.2v2h-2.2zM1485.6,132.4h2.2v2h-2.2zM1490.4,137.6h2.2v2h-2.2zM1493.6,140.3h2.2v2h-2.2zM1496.8,140.3h2.2v4.6h-2.2zM1500,145.5h2.2v4.6h-2.2zM1508,145.5h2.2v2h-2.2zM1519.2,127.2h2.2v9.8h-2.2zM1525.6,129.8h2.2v4.6h-2.2zM1535.2,137.6h2.2v2h-2.2zM1540,150.7h2.2v2h-2.2zM1549.6,171.7h2.2v4.6h-2.2zM1557.6,161.2h2.2v2h-2.2zM1562.4,163.8h2.2v2h-2.2zM1564,163.8h2.2v2h-2.2zM1565.6,163.8h2.2v2h-2.2zM1567.2,163.8h2.2v2h-2.2zM1568.8,156h2.2v9.8h-2.2zM1573.6,171.7h2.2v2h-2.2zM1575.2,171.7h2.2v2h-2.2zM1583.2,176.9h2.2v2h-2.2zM1584.8,176.9h2.2v2h-2.2zM1592.8,166.4h2.2v2h-2.2zM1604,153.3h2.2v2h-2.2zM1605.6,153.3h2.2v2h-2.2zM1610.4,158.6h2.2v4.6h-2.2zM1612,161.2h2.2v2h-2.2zM1616.8,161.2h2.2v2h-2.2zM1620,156h2.2v2h-2.2zM1624.8,148.1h2.2v2h-2.2zM1626.4,148.1h2.2v2h-2.2zM1628,148.1h2.2v4.6h-2.2zM1634.4,150.7h2.2v7.2h-2.2zM1637.6,161.2h2.2v2h-2.2zM1640.8,156h2.2v2h-2.2zM1644,150.7h2.2v2h-2.2zM1647.2,148.1h2.2v2h-2.2zM1650.4,145.5h2.2v7.2h-2.2zM1652,145.5h2.2v2h-2.2zM1653.6,145.5h2.2v7.2h-2.2zM1656.8,140.3h2.2v2h-2.2zM1658.4,140.3h2.2v2h-2.2zM1661.6,135h2.2v4.6h-2.2zM1664.8,135h2.2v2h-2.2zM1666.4,135h2.2v2h-2.2zM1668,135h2.2v2h-2.2zM1677.6,132.4h2.2v2h-2.2zM1682.4,124.6h2.2v2h-2.2zM1685.6,124.6h2.2v2h-2.2zM1688.8,127.2h2.2v2h-2.2zM1690.4,122h2.2v7.2h-2.2zM1692,127.2h2.2v2h-2.2zM1695.2,129.8h2.2v2h-2.2zM1696.8,129.8h2.2v2h-2.2zM1698.4,129.8h2.2v4.6h-2.2zM1700,129.8h2.2v2h-2.2zM1701.6,129.8h2.2v4.6h-2.2zM1704.8,135h2.2v2h-2.2zM1716,145.5h2.2v4.6h-2.2zM1717.6,145.5h2.2v2h-2.2zM1725.6,156h2.2v2h-2.2zM1727.2,156h2.2v2h-2.2zM1728.8,156h2.2v2h-2.2zM1730.4,156h2.2v4.6h-2.2zM1736.8,161.2h2.2v4.6h-2.2zM1738.4,161.2h2.2v4.6h-2.2zM1741.6,161.2h2.2v2h-2.2zM1743.2,161.2h2.2v2h-2.2zM1744.8,161.2h2.2v2h-2.2zM1749.6,156h2.2v7.2h-2.2zM1751.2,156h2.2v7.2h-2.2zM1757.6,153.3h2.2v2h-2.2zM1759.2,153.3h2.2v2h-2.2zM1764,161.2h2.2v2h-2.2zM1765.6,161.2h2.2v2h-2.2zM1768.8,158.6h2.2v2h-2.2zM1772,156h2.2v2h-2.2zM1773.6,156h2.2v2h-2.2zM1776.8,153.3h2.2v2h-2.2zM1780,150.7h2.2v2h-2.2zM1781.6,150.7h2.2v4.6h-2.2zM1788,161.2h2.2v2h-2.2zM1789.6,158.6h2.2v4.6h-2.2zM1796,150.7h2.2v2h-2.2zM1808.8,163.8h2.2v4.6h-2.2zM1810.4,163.8h2.2v2h-2.2zM1812,163.8h2.2v2h-2.2zM1813.6,163.8h2.2v7.2h-2.2zM1816.8,166.4h2.2v2h-2.2zM1820,166.4h2.2v2h-2.2zM1828,163.8h2.2v7.2h-2.2zM1831.2,176.9h2.2v2h-2.2zM1832.8,176.9h2.2v2h-2.2zM1834.4,176.9h2.2v2h-2.2zM1837.6,179.5h2.2v2h-2.2zM1839.2,179.5h2.2v2h-2.2zM1842.4,174.3h2.2v7.2h-2.2zM1844,179.5h2.2v2h-2.2zM1852,190h2.2v2h-2.2zM1853.6,190h2.2v2h-2.2zM1855.2,187.4h2.2v4.6h-2.2zM1866.4,169h2.2v2h-2.2zM1868,169h2.2v2h-2.2zM1871.2,161.2h2.2v4.6h-2.2zM1874.4,161.2h2.2v2h-2.2zM1877.6,158.6h2.2v2h-2.2zM1880.8,156h2.2v4.6h-2.2zM1884,156h2.2v2h-2.2zM1885.6,156h2.2v2h-2.2zM1888.8,158.6h2.2v2h-2.2zM1898.4,127.2h2.2v2h-2.2zM1904.8,129.8h2.2v2h-2.2zM1906.4,124.6h2.2v7.2h-2.2zM1908,129.8h2.2v2h-2.2zM1912.8,132.4h2.2v2h-2.2zM1914.4,132.4h2.2v2h-2.2zM1919.2,135h2.2v2h-2.2zM1920.8,135h2.2v2h-2.2zM1922.4,135h2.2v2h-2.2zM1924,135h2.2v2h-2.2zM1927.2,127.2h2.2v7.2h-2.2z" fill="#f0ec88"/>
<path d="M52,316.5h2.2v5.2h-2.2zM55.2,321.8h2.2v2.6h-2.2zM60,327h2.2v2.6h-2.2zM122.4,306.1h2.2v5.2h-2.2zM135.2,311.3h2.2v2.6h-2.2zM136.8,313.9h2.2v2.6h-2.2zM141.6,316.5h2.2v2.6h-2.2zM170.4,290.4h2.2v2.6h-2.2zM184.8,290.4h2.2v2.6h-2.2zM186.4,293h2.2v2.6h-2.2zM189.6,295.6h2.2v2.6h-2.2zM192.8,298.2h2.2v5.2h-2.2zM213.6,279.9h2.2v2.6h-2.2zM220,274.7h2.2v7.8h-2.2zM223.2,282.5h2.2v5.2h-2.2zM224.8,287.8h2.2v2.6h-2.2zM229.6,287.8h2.2v5.2h-2.2zM232.8,293h2.2v2.6h-2.2zM236,295.6h2.2v2.6h-2.2zM239.2,298.2h2.2v7.8h-2.2zM255.2,274.7h2.2v2.6h-2.2zM263.2,269.4h2.2v2.6h-2.2zM266.4,272.1h2.2v2.6h-2.2zM269.6,269.4h2.2v7.8h-2.2zM271.2,277.3h2.2v5.2h-2.2zM287.2,266.8h2.2v2.6h-2.2zM292,266.8h2.2v2.6h-2.2zM298.4,269.4h2.2v2.6h-2.2zM303.2,269.4h2.2v10.5h-2.2zM306.4,274.7h2.2v7.8h-2.2zM308,277.3h2.2v7.8h-2.2zM314.4,277.3h2.2v15.7h-2.2zM316,293h2.2v2.6h-2.2zM317.6,295.6h2.2v5.2h-2.2zM328.8,279.9h2.2v5.2h-2.2zM332,282.5h2.2v2.6h-2.2zM333.6,285.1h2.2v2.6h-2.2zM348,269.4h2.2v2.6h-2.2zM359.2,269.4h2.2v7.8h-2.2zM367.2,256.4h2.2v2.6h-2.2zM372,259h2.2v2.6h-2.2zM375.2,261.6h2.2v2.6h-2.2zM376.8,264.2h2.2v2.6h-2.2zM383.2,266.8h2.2v2.6h-2.2zM396,266.8h2.2v7.8h-2.2zM399.2,266.8h2.2v5.2h-2.2zM407.2,256.4h2.2v7.8h-2.2zM408.8,264.2h2.2v7.8h-2.2zM412,266.8h2.2v2.6h-2.2zM416.8,261.6h2.2v7.8h-2.2zM421.6,269.4h2.2v2.6h-2.2zM423.2,266.8h2.2v7.8h-2.2zM434.4,269.4h2.2v5.2h-2.2zM439.2,274.7h2.2v2.6h-2.2zM442.4,277.3h2.2v2.6h-2.2zM444,279.9h2.2v7.8h-2.2zM447.2,287.8h2.2v2.6h-2.2zM450.4,287.8h2.2v7.8h-2.2zM452,287.8h2.2v7.8h-2.2zM472.8,287.8h2.2v5.2h-2.2zM506.4,282.5h2.2v7.8h-2.2zM512.8,287.8h2.2v2.6h-2.2zM520.8,290.4h2.2v2.6h-2.2zM525.6,293h2.2v2.6h-2.2zM538.4,295.6h2.2v2.6h-2.2zM554.4,293h2.2v2.6h-2.2zM589.6,290.4h2.2v2.6h-2.2zM594.4,293h2.2v5.2h-2.2zM596,298.2h2.2v2.6h-2.2zM597.6,300.8h2.2v2.6h-2.2zM615.2,303.5h2.2v2.6h-2.2zM631.2,295.6h2.2v5.2h-2.2zM648.8,287.8h2.2v2.6h-2.2zM653.6,290.4h2.2v7.8h-2.2zM660,295.6h2.2v5.2h-2.2zM674.4,293h2.2v5.2h-2.2zM682.4,290.4h2.2v2.6h-2.2zM684,293h2.2v2.6h-2.2zM685.6,295.6h2.2v5.2h-2.2zM692,300.8h2.2v13.1h-2.2zM693.6,306.1h2.2v13.1h-2.2zM696.8,313.9h2.2v13.1h-2.2zM698.4,327h2.2v2.6h-2.2zM700,329.6h2.2v2.6h-2.2zM701.6,332.2h2.2v2.6h-2.2zM708,332.2h2.2v2.6h-2.2zM711.2,332.2h2.2v2.6h-2.2zM714.4,332.2h2.2v20.9h-2.2zM724,347.9h2.2v2.6h-2.2zM730.4,342.7h2.2v5.2h-2.2zM733.6,342.7h2.2v2.6h-2.2zM740,345.3h2.2v2.6h-2.2zM741.6,347.9h2.2v2.6h-2.2zM744.8,350.5h2.2v5.2h-2.2zM748,353.2h2.2v2.6h-2.2zM767.2,329.6h2.2v2.6h-2.2zM783.2,308.7h2.2v7.8h-2.2zM786.4,313.9h2.2v5.2h-2.2zM789.6,316.5h2.2v2.6h-2.2zM805.6,277.3h2.2v13.1h-2.2zM808.8,285.1h2.2v7.8h-2.2zM813.6,293h2.2v2.6h-2.2zM818.4,293h2.2v2.6h-2.2zM826.4,277.3h2.2v13.1h-2.2zM829.6,290.4h2.2v2.6h-2.2zM839.2,285.1h2.2v2.6h-2.2zM848.8,282.5h2.2v2.6h-2.2zM855.2,282.5h2.2v2.6h-2.2zM860,279.9h2.2v7.8h-2.2zM861.6,287.8h2.2v7.8h-2.2zM863.2,290.4h2.2v10.5h-2.2zM879.2,293h2.2v2.6h-2.2zM882.4,293h2.2v2.6h-2.2zM887.2,295.6h2.2v2.6h-2.2zM888.8,298.2h2.2v7.8h-2.2zM890.4,298.2h2.2v5.2h-2.2zM895.2,303.5h2.2v7.8h-2.2zM912.8,303.5h2.2v2.6h-2.2zM917.6,303.5h2.2v5.2h-2.2zM938.4,282.5h2.2v2.6h-2.2zM943.2,285.1h2.2v5.2h-2.2zM959.2,274.7h2.2v2.6h-2.2zM960.8,274.7h2.2v7.8h-2.2zM965.6,282.5h2.2v10.5h-2.2zM986.4,264.2h2.2v5.2h-2.2zM999.2,264.2h2.2v2.6h-2.2zM1012,259h2.2v5.2h-2.2zM1015.2,264.2h2.2v7.8h-2.2zM1016.8,272.1h2.2v2.6h-2.2zM1018.4,274.7h2.2v13.1h-2.2zM1020,282.5h2.2v10.5h-2.2zM1023.2,285.1h2.2v2.6h-2.2zM1024.8,287.8h2.2v5.2h-2.2zM1032.8,293h2.2v5.2h-2.2zM1048.8,274.7h2.2v2.6h-2.2zM1052,277.3h2.2v2.6h-2.2zM1055.2,279.9h2.2v2.6h-2.2zM1056.8,282.5h2.2v2.6h-2.2zM1060,282.5h2.2v7.8h-2.2zM1080.8,277.3h2.2v7.8h-2.2zM1093.6,243.3h2.2v2.6h-2.2zM1096.8,245.9h2.2v7.8h-2.2zM1098.4,248.5h2.2v10.5h-2.2zM1103.2,253.8h2.2v5.2h-2.2zM1109.6,245.9h2.2v2.6h-2.2zM1116,227.6h2.2v10.5h-2.2zM1128.8,230.2h2.2v5.2h-2.2zM1130.4,232.8h2.2v5.2h-2.2zM1133.6,238.1h2.2v2.6h-2.2zM1152.8,211.9h2.2v13.1h-2.2zM1157.6,225h2.2v7.8h-2.2zM1159.2,232.8h2.2v2.6h-2.2zM1160.8,235.4h2.2v5.2h-2.2zM1162.4,238.1h2.2v5.2h-2.2zM1188,183.1h2.2v5.2h-2.2zM1189.6,188.4h2.2v2.6h-2.2zM1199.2,157h2.2v13.1h-2.2zM1200.8,170h2.2v10.5h-2.2zM1204,172.7h2.2v7.8h-2.2zM1208.8,177.9h2.2v5.2h-2.2zM1212,172.7h2.2v13.1h-2.2zM1221.6,159.6h2.2v13.1h-2.2zM1223.2,162.2h2.2v7.8h-2.2zM1226.4,167.4h2.2v5.2h-2.2zM1228,172.7h2.2v5.2h-2.2zM1229.6,177.9h2.2v2.6h-2.2zM1231.2,180.5h2.2v2.6h-2.2zM1240.8,159.6h2.2v10.5h-2.2zM1242.4,157h2.2v7.8h-2.2zM1245.6,154.3h2.2v13.1h-2.2zM1247.2,162.2h2.2v7.8h-2.2zM1248.8,170h2.2v2.6h-2.2zM1258.4,159.6h2.2v5.2h-2.2zM1268,154.3h2.2v5.2h-2.2zM1287.2,136h2.2v10.5h-2.2zM1293.6,143.9h2.2v2.6h-2.2zM1301.6,133.4h2.2v13.1h-2.2zM1304.8,143.9h2.2v13.1h-2.2zM1308,151.7h2.2v2.6h-2.2zM1312.8,149.1h2.2v5.2h-2.2zM1316,149.1h2.2v2.6h-2.2zM1317.6,149.1h2.2v5.2h-2.2zM1320.8,151.7h2.2v7.8h-2.2zM1324,159.6h2.2v13.1h-2.2zM1325.6,164.8h2.2v7.8h-2.2zM1327.2,170h2.2v7.8h-2.2zM1332,188.4h2.2v13.1h-2.2zM1335.2,185.7h2.2v10.5h-2.2zM1336.8,183.1h2.2v13.1h-2.2zM1343.2,191h2.2v2.6h-2.2zM1346.4,185.7h2.2v7.8h-2.2zM1349.6,183.1h2.2v5.2h-2.2zM1352.8,167.4h2.2v10.5h-2.2zM1359.2,151.7h2.2v13.1h-2.2zM1364,149.1h2.2v2.6h-2.2zM1368.8,138.6h2.2v7.8h-2.2zM1370.4,138.6h2.2v7.8h-2.2zM1383.2,117.7h2.2v2.6h-2.2zM1384.8,120.3h2.2v2.6h-2.2zM1388,115.1h2.2v7.8h-2.2zM1389.6,123h2.2v7.8h-2.2zM1391.2,128.2h2.2v5.2h-2.2zM1392.8,133.4h2.2v7.8h-2.2zM1394.4,141.3h2.2v2.6h-2.2zM1397.6,138.6h2.2v7.8h-2.2zM1420,120.3h2.2v5.2h-2.2zM1421.6,125.6h2.2v2.6h-2.2zM1442.4,86.3h2.2v15.7h-2.2zM1444,102h2.2v5.2h-2.2zM1445.6,107.3h2.2v10.5h-2.2zM1447.2,117.7h2.2v10.5h-2.2zM1448.8,128.2h2.2v10.5h-2.2zM1450.4,133.4h2.2v13.1h-2.2zM1453.6,133.4h2.2v10.5h-2.2zM1461.6,141.3h2.2v2.6h-2.2zM1464.8,143.9h2.2v5.2h-2.2zM1476,128.2h2.2v2.6h-2.2zM1484,130.8h2.2v2.6h-2.2zM1487.2,133.4h2.2v2.6h-2.2zM1488.8,133.4h2.2v5.2h-2.2zM1492,138.6h2.2v2.6h-2.2zM1495.2,141.3h2.2v5.2h-2.2zM1498.4,143.9h2.2v2.6h-2.2zM1503.2,143.9h2.2v2.6h-2.2zM1504.8,146.5h2.2v7.8h-2.2zM1512.8,136h2.2v10.5h-2.2zM1516,138.6h2.2v5.2h-2.2zM1522.4,130.8h2.2v2.6h-2.2zM1527.2,130.8h2.2v5.2h-2.2zM1530.4,128.2h2.2v10.5h-2.2zM1533.6,130.8h2.2v13.1h-2.2zM1536.8,138.6h2.2v13.1h-2.2zM1538.4,146.5h2.2v10.5h-2.2zM1541.6,143.9h2.2v23.5h-2.2zM1543.2,159.6h2.2v13.1h-2.2zM1544.8,167.4h2.2v10.5h-2.2zM1546.4,177.9h2.2v5.2h-2.2zM1552.8,172.7h2.2v7.8h-2.2zM1560.8,159.6h2.2v5.2h-2.2zM1570.4,164.8h2.2v2.6h-2.2zM1572,167.4h2.2v5.2h-2.2zM1578.4,167.4h2.2v5.2h-2.2zM1581.6,172.7h2.2v5.2h-2.2zM1594.4,167.4h2.2v2.6h-2.2zM1608.8,159.6h2.2v2.6h-2.2zM1615.2,159.6h2.2v2.6h-2.2zM1629.6,149.1h2.2v5.2h-2.2zM1631.2,151.7h2.2v5.2h-2.2zM1636,157h2.2v5.2h-2.2zM1669.6,136h2.2v5.2h-2.2zM1674.4,130.8h2.2v5.2h-2.2zM1687.2,125.6h2.2v2.6h-2.2zM1703.2,130.8h2.2v5.2h-2.2zM1708,136h2.2v2.6h-2.2zM1711.2,133.4h2.2v10.5h-2.2zM1714.4,136h2.2v10.5h-2.2zM1719.2,146.5h2.2v2.6h-2.2zM1720.8,149.1h2.2v7.8h-2.2zM1722.4,151.7h2.2v5.2h-2.2zM1733.6,154.3h2.2v2.6h-2.2zM1735.2,157h2.2v5.2h-2.2zM1756,149.1h2.2v5.2h-2.2zM1762.4,157h2.2v5.2h-2.2zM1783.2,151.7h2.2v5.2h-2.2zM1784.8,157h2.2v5.2h-2.2zM1797.6,151.7h2.2v5.2h-2.2zM1799.2,154.3h2.2v7.8h-2.2zM1800.8,162.2h2.2v10.5h-2.2zM1815.2,164.8h2.2v2.6h-2.2zM1821.6,164.8h2.2v5.2h-2.2zM1826.4,167.4h2.2v2.6h-2.2zM1829.6,170h2.2v7.8h-2.2zM1836,172.7h2.2v7.8h-2.2zM1845.6,180.5h2.2v5.2h-2.2zM1847.2,183.1h2.2v10.5h-2.2zM1864.8,167.4h2.2v2.6h-2.2zM1887.2,157h2.2v2.6h-2.2zM1916,133.4h2.2v2.6h-2.2z" fill="#0a7ef2"/>
<path d="M34.4,313.9h2.2v2.6h-2.2zM44,311.3h2.2v2.6h-2.2zM85.6,327h2.2v2.6h-2.2zM106.4,311.3h2.2v7.8h-2.2zM108,308.7h2.2v2.6h-2.2zM146.4,311.3h2.2v7.8h-2.2zM148,303.5h2.2v7.8h-2.2zM149.6,303.5h2.2v5.2h-2.2zM162.4,300.8h2.2v2.6h-2.2zM167.2,295.6h2.2v5.2h-2.2zM168.8,290.4h2.2v5.2h-2.2zM173.6,287.8h2.2v5.2h-2.2zM196,293h2.2v7.8h-2.2zM197.6,290.4h2.2v2.6h-2.2zM200.8,282.5h2.2v7.8h-2.2zM204,285.1h2.2v7.8h-2.2zM207.2,277.3h2.2v7.8h-2.2zM215.2,279.9h2.2v2.6h-2.2zM218.4,277.3h2.2v7.8h-2.2zM226.4,285.1h2.2v5.2h-2.2zM242.4,295.6h2.2v5.2h-2.2zM244,287.8h2.2v7.8h-2.2zM247.2,282.5h2.2v5.2h-2.2zM250.4,274.7h2.2v7.8h-2.2zM256.8,269.4h2.2v7.8h-2.2zM268,269.4h2.2v10.5h-2.2zM274.4,274.7h2.2v7.8h-2.2zM282.4,272.1h2.2v5.2h-2.2zM284,269.4h2.2v2.6h-2.2zM285.6,264.2h2.2v5.2h-2.2zM288.8,266.8h2.2v2.6h-2.2zM301.6,269.4h2.2v2.6h-2.2zM319.2,293h2.2v10.5h-2.2zM322.4,285.1h2.2v13.1h-2.2zM327.2,279.9h2.2v5.2h-2.2zM330.4,282.5h2.2v2.6h-2.2zM335.2,282.5h2.2v5.2h-2.2zM336.8,282.5h2.2v2.6h-2.2zM338.4,279.9h2.2v2.6h-2.2zM344.8,269.4h2.2v7.8h-2.2zM351.2,272.1h2.2v5.2h-2.2zM354.4,269.4h2.2v2.6h-2.2zM360.8,261.6h2.2v10.5h-2.2zM362.4,256.4h2.2v5.2h-2.2zM394.4,266.8h2.2v2.6h-2.2zM397.6,266.8h2.2v5.2h-2.2zM400.8,266.8h2.2v10.5h-2.2zM402.4,259h2.2v7.8h-2.2zM404,259h2.2v2.6h-2.2zM410.4,266.8h2.2v2.6h-2.2zM415.2,266.8h2.2v2.6h-2.2zM432.8,272.1h2.2v2.6h-2.2zM448.8,287.8h2.2v2.6h-2.2zM464.8,293h2.2v2.6h-2.2zM466.4,287.8h2.2v5.2h-2.2zM477.6,290.4h2.2v2.6h-2.2zM487.2,285.1h2.2v5.2h-2.2zM488.8,282.5h2.2v2.6h-2.2zM508,287.8h2.2v2.6h-2.2zM544.8,295.6h2.2v2.6h-2.2zM546.4,293h2.2v2.6h-2.2zM562.4,293h2.2v5.2h-2.2zM581.6,290.4h2.2v2.6h-2.2zM618.4,298.2h2.2v7.8h-2.2zM623.2,295.6h2.2v5.2h-2.2zM632.8,298.2h2.2v2.6h-2.2zM639.2,295.6h2.2v2.6h-2.2zM642.4,293h2.2v2.6h-2.2zM644,287.8h2.2v5.2h-2.2zM671.2,298.2h2.2v2.6h-2.2zM672.8,293h2.2v5.2h-2.2zM680.8,290.4h2.2v5.2h-2.2zM695.2,313.9h2.2v5.2h-2.2zM704.8,324.4h2.2v10.5h-2.2zM709.6,332.2h2.2v2.6h-2.2zM712.8,332.2h2.2v7.8h-2.2zM719.2,345.3h2.2v7.8h-2.2zM722.4,347.9h2.2v2.6h-2.2zM725.6,347.9h2.2v2.6h-2.2zM727.2,345.3h2.2v2.6h-2.2zM728.8,342.7h2.2v2.6h-2.2zM732,342.7h2.2v2.6h-2.2zM749.6,347.9h2.2v7.8h-2.2zM756,340.1h2.2v10.5h-2.2zM759.2,342.7h2.2v2.6h-2.2zM760.8,340.1h2.2v2.6h-2.2zM762.4,337.5h2.2v7.8h-2.2zM764,332.2h2.2v5.2h-2.2zM765.6,329.6h2.2v7.8h-2.2zM772,327h2.2v7.8h-2.2zM775.2,321.8h2.2v5.2h-2.2zM776.8,316.5h2.2v5.2h-2.2zM778.4,313.9h2.2v2.6h-2.2zM784.8,311.3h2.2v5.2h-2.2zM788,316.5h2.2v7.8h-2.2zM791.2,308.7h2.2v10.5h-2.2zM792.8,303.5h2.2v5.2h-2.2zM796,293h2.2v7.8h-2.2zM797.6,282.5h2.2v10.5h-2.2zM799.2,277.3h2.2v5.2h-2.2zM816.8,293h2.2v2.6h-2.2zM820,290.4h2.2v5.2h-2.2zM823.2,277.3h2.2v13.1h-2.2zM832.8,287.8h2.2v5.2h-2.2zM837.6,285.1h2.2v2.6h-2.2zM842.4,282.5h2.2v5.2h-2.2zM853.6,282.5h2.2v2.6h-2.2zM856.8,282.5h2.2v5.2h-2.2zM866.4,298.2h2.2v5.2h-2.2zM868,295.6h2.2v2.6h-2.2zM871.2,293h2.2v2.6h-2.2zM880.8,293h2.2v2.6h-2.2zM903.2,306.1h2.2v2.6h-2.2zM904.8,303.5h2.2v2.6h-2.2zM914.4,303.5h2.2v2.6h-2.2zM919.2,300.8h2.2v7.8h-2.2zM922.4,295.6h2.2v5.2h-2.2zM924,293h2.2v10.5h-2.2zM927.2,282.5h2.2v10.5h-2.2zM932,277.3h2.2v10.5h-2.2zM951.2,282.5h2.2v7.8h-2.2zM952.8,279.9h2.2v5.2h-2.2zM957.6,274.7h2.2v5.2h-2.2zM968.8,282.5h2.2v7.8h-2.2zM970.4,277.3h2.2v5.2h-2.2zM976.8,269.4h2.2v7.8h-2.2zM978.4,266.8h2.2v5.2h-2.2zM997.6,264.2h2.2v5.2h-2.2zM1000.8,264.2h2.2v2.6h-2.2zM1002.4,259h2.2v5.2h-2.2zM1021.6,285.1h2.2v13.1h-2.2zM1034.4,293h2.2v5.2h-2.2zM1036,285.1h2.2v7.8h-2.2zM1040.8,279.9h2.2v18.3h-2.2zM1064.8,285.1h2.2v5.2h-2.2zM1072.8,282.5h2.2v2.6h-2.2zM1077.6,274.7h2.2v7.8h-2.2zM1082.4,274.7h2.2v5.2h-2.2zM1084,269.4h2.2v5.2h-2.2zM1085.6,245.9h2.2v23.5h-2.2zM1092,243.3h2.2v2.6h-2.2zM1100,256.4h2.2v2.6h-2.2zM1106.4,253.8h2.2v10.5h-2.2zM1108,245.9h2.2v7.8h-2.2zM1111.2,238.1h2.2v15.7h-2.2zM1114.4,227.6h2.2v5.2h-2.2zM1117.6,230.2h2.2v2.6h-2.2zM1120.8,227.6h2.2v2.6h-2.2zM1122.4,225h2.2v5.2h-2.2zM1136.8,235.4h2.2v5.2h-2.2zM1138.4,230.2h2.2v5.2h-2.2zM1141.6,225h2.2v5.2h-2.2zM1144.8,222.4h2.2v2.6h-2.2zM1148,217.1h2.2v5.2h-2.2zM1165.6,240.7h2.2v7.8h-2.2zM1167.2,232.8h2.2v7.8h-2.2zM1172,227.6h2.2v5.2h-2.2zM1173.6,214.5h2.2v13.1h-2.2zM1175.2,211.9h2.2v13.1h-2.2zM1176.8,196.2h2.2v15.7h-2.2zM1178.4,196.2h2.2v13.1h-2.2zM1180,193.6h2.2v7.8h-2.2zM1181.6,183.1h2.2v10.5h-2.2zM1186.4,177.9h2.2v10.5h-2.2zM1191.2,180.5h2.2v15.7h-2.2zM1192.8,170h2.2v15.7h-2.2zM1194.4,167.4h2.2v2.6h-2.2zM1196,164.8h2.2v2.6h-2.2zM1202.4,167.4h2.2v7.8h-2.2zM1207.2,177.9h2.2v7.8h-2.2zM1213.6,183.1h2.2v7.8h-2.2zM1215.2,172.7h2.2v10.5h-2.2zM1216.8,170h2.2v10.5h-2.2zM1218.4,159.6h2.2v15.7h-2.2zM1232.8,167.4h2.2v15.7h-2.2zM1237.6,157h2.2v15.7h-2.2zM1239.2,159.6h2.2v5.2h-2.2zM1244,146.5h2.2v18.3h-2.2zM1252,164.8h2.2v10.5h-2.2zM1255.2,159.6h2.2v5.2h-2.2zM1261.6,159.6h2.2v5.2h-2.2zM1264.8,157h2.2v2.6h-2.2zM1266.4,154.3h2.2v2.6h-2.2zM1269.6,151.7h2.2v7.8h-2.2zM1272.8,164.8h2.2v7.8h-2.2zM1274.4,162.2h2.2v7.8h-2.2zM1277.6,149.1h2.2v13.1h-2.2zM1279.2,149.1h2.2v10.5h-2.2zM1280.8,138.6h2.2v10.5h-2.2zM1284,141.3h2.2v2.6h-2.2zM1285.6,136h2.2v7.8h-2.2zM1292,143.9h2.2v2.6h-2.2zM1295.2,141.3h2.2v5.2h-2.2zM1300,133.4h2.2v15.7h-2.2zM1309.6,151.7h2.2v2.6h-2.2zM1311.2,149.1h2.2v2.6h-2.2zM1314.4,149.1h2.2v5.2h-2.2zM1333.6,185.7h2.2v13.1h-2.2zM1340,191h2.2v10.5h-2.2zM1344.8,191h2.2v2.6h-2.2zM1348,177.9h2.2v15.7h-2.2zM1351.2,170h2.2v15.7h-2.2zM1354.4,167.4h2.2v10.5h-2.2zM1356,164.8h2.2v2.6h-2.2zM1357.6,151.7h2.2v15.7h-2.2zM1360.8,154.3h2.2v5.2h-2.2zM1362.4,149.1h2.2v13.1h-2.2zM1365.6,141.3h2.2v10.5h-2.2zM1367.2,138.6h2.2v10.5h-2.2zM1372,128.2h2.2v18.3h-2.2zM1373.6,130.8h2.2v13.1h-2.2zM1375.2,123h2.2v7.8h-2.2zM1378.4,117.7h2.2v10.5h-2.2zM1386.4,117.7h2.2v5.2h-2.2zM1399.2,141.3h2.2v5.2h-2.2zM1400.8,138.6h2.2v2.6h-2.2zM1402.4,133.4h2.2v5.2h-2.2zM1404,130.8h2.2v10.5h-2.2zM1410.4,128.2h2.2v5.2h-2.2zM1412,117.7h2.2v10.5h-2.2zM1413.6,123h2.2v2.6h-2.2zM1418.4,120.3h2.2v2.6h-2.2zM1428,120.3h2.2v5.2h-2.2zM1429.6,115.1h2.2v5.2h-2.2zM1431.2,112.5h2.2v10.5h-2.2zM1432.8,107.3h2.2v5.2h-2.2zM1434.4,91.6h2.2v15.7h-2.2zM1436,94.2h2.2v2.6h-2.2zM1452,138.6h2.2v2.6h-2.2zM1455.2,138.6h2.2v5.2h-2.2zM1466.4,136h2.2v15.7h-2.2zM1471.2,125.6h2.2v10.5h-2.2zM1472.8,125.6h2.2v7.8h-2.2zM1501.6,143.9h2.2v2.6h-2.2zM1506.4,146.5h2.2v2.6h-2.2zM1509.6,143.9h2.2v2.6h-2.2zM1511.2,138.6h2.2v5.2h-2.2zM1514.4,138.6h2.2v7.8h-2.2zM1517.6,136h2.2v7.8h-2.2zM1520.8,130.8h2.2v5.2h-2.2zM1524,130.8h2.2v2.6h-2.2zM1528.8,128.2h2.2v7.8h-2.2zM1532,130.8h2.2v7.8h-2.2zM1548,170h2.2v13.1h-2.2zM1551.2,172.7h2.2v2.6h-2.2zM1554.4,167.4h2.2v7.8h-2.2zM1556,162.2h2.2v10.5h-2.2zM1559.2,159.6h2.2v2.6h-2.2zM1576.8,167.4h2.2v5.2h-2.2zM1586.4,175.3h2.2v2.6h-2.2zM1589.6,167.4h2.2v2.6h-2.2zM1596,167.4h2.2v2.6h-2.2zM1597.6,162.2h2.2v5.2h-2.2zM1599.2,157h2.2v5.2h-2.2zM1600.8,154.3h2.2v2.6h-2.2zM1613.6,159.6h2.2v2.6h-2.2zM1618.4,157h2.2v5.2h-2.2zM1621.6,154.3h2.2v2.6h-2.2zM1623.2,149.1h2.2v5.2h-2.2zM1639.2,157h2.2v5.2h-2.2zM1642.4,146.5h2.2v10.5h-2.2zM1645.6,149.1h2.2v2.6h-2.2zM1648.8,146.5h2.2v5.2h-2.2zM1660,138.6h2.2v2.6h-2.2zM1671.2,138.6h2.2v5.2h-2.2zM1672.8,130.8h2.2v7.8h-2.2zM1676,128.2h2.2v7.8h-2.2zM1679.2,130.8h2.2v2.6h-2.2zM1680.8,125.6h2.2v5.2h-2.2zM1712.8,141.3h2.2v2.6h-2.2zM1732,151.7h2.2v5.2h-2.2zM1746.4,159.6h2.2v5.2h-2.2zM1748,157h2.2v2.6h-2.2zM1752.8,149.1h2.2v7.8h-2.2zM1767.2,159.6h2.2v5.2h-2.2zM1770.4,157h2.2v2.6h-2.2zM1778.4,151.7h2.2v2.6h-2.2zM1791.2,154.3h2.2v7.8h-2.2zM1792.8,151.7h2.2v2.6h-2.2zM1802.4,170h2.2v5.2h-2.2zM1804,167.4h2.2v5.2h-2.2zM1805.6,164.8h2.2v2.6h-2.2zM1823.2,167.4h2.2v2.6h-2.2zM1848.8,191h2.2v2.6h-2.2zM1858.4,175.3h2.2v10.5h-2.2zM1863.2,167.4h2.2v5.2h-2.2zM1872.8,162.2h2.2v2.6h-2.2zM1876,154.3h2.2v7.8h-2.2zM1879.2,157h2.2v2.6h-2.2zM1890.4,151.7h2.2v7.8h-2.2zM1892,146.5h2.2v5.2h-2.2zM1893.6,138.6h2.2v13.1h-2.2zM1895.2,136h2.2v2.6h-2.2zM1896.8,128.2h2.2v7.8h-2.2zM1901.6,130.8h2.2v2.6h-2.2zM1925.6,133.4h2.2v2.6h-2.2z" fill="#ff0000"/>
<text x="67.6" y="387.1" textLength="17.7" lengthAdjust="spacingAndGlyphs" font-family="Liberation Mono" font-size="21" fill="#dadada" stroke="#dadada" stroke-width="0.2">O2</text>
<text x="94" y="387.1" textLength="17.7" lengthAdjust="spacingAndGlyphs" font-family="Liberation Mono" font-size="21" fill="#dadada" stroke="#dadada" stroke-width="0.2">O4</text>
<text x="106" y="387.1" textLength="17.7" lengthAdjust="spacingAndGlyphs" font-family="Liberation Mono" font-size="21" fill="#dadada" stroke="#dadada" stroke-width="0.2">O5</text>
<text x="119" y="387.1" textLength="17.7" lengthAdjust="spacingAndGlyphs" font-family="Liberation Mono" font-size="21" fill="#dadada" stroke="#dadada" stroke-width="0.2">O6</text>
<text x="168.6" y="387.1" textLength="17.7" lengthAdjust="spacingAndGlyphs" font-family="Liberation Mono" font-size="21" fill="#dadada" stroke="#dadada" stroke-width="0.2">O9</text>
<text x="266.4" y="387.1" textLength="17.7" lengthAdjust="spacingAndGlyphs" font-family="Liberation Mono" font-size="21" fill="#dadada" stroke="#dadada" stroke-width="0.2">1O</text>
<text x="361.6" y="387.1" textLength="17.7" lengthAdjust="spacingAndGlyphs" font-family="Liberation Mono" font-size="21" fill="#dadada" stroke="#dadada" stroke-width="0.2">11</text>
<text x="452.2" y="387.1" textLength="17.7" lengthAdjust="spacingAndGlyphs" font-family="Liberation Mono" font-size="21" fill="#dadada" stroke="#dadada" stroke-width="0.2">12</text>
<text x="549" y="387.1" textLength="17.7" lengthAdjust="spacingAndGlyphs" font-family="Liberation Mono" font-size="21" fill="#dadada" stroke="#dadada" stroke-width="0.2">13</text>
<text x="644.3" y="387.1" textLength="17.7" lengthAdjust="spacingAndGlyphs" font-family="Liberation Mono" font-size="21" fill="#dadada" stroke="#dadada" stroke-width="0.2">14</text>
<text x="714.2" y="387.1" textLength="17.7" lengthAdjust="spacingAndGlyphs" font-family="Liberation Mono" font-size="21" fill="#dadada" stroke="#dadada" stroke-width="0.2">15</text>
<text x="758.3" y="387.1" textLength="17.7" lengthAdjust="spacingAndGlyphs" font-family="Liberation Mono" font-size="21" fill="#dadada" stroke="#dadada" stroke-width="0.2">16</text>
<text x="805.2" y="387.1" textLength="17.7" lengthAdjust="spacingAndGlyphs" font-family="Liberation Mono" font-size="21" fill="#dadada" stroke="#dadada" stroke-width="0.2">17</text>
<text x="900.5" y="387.1" textLength="17.7" lengthAdjust="spacingAndGlyphs" font-family="Liberation Mono" font-size="21" fill="#dadada" stroke="#dadada" stroke-width="0.2">18</text>
<text x="994.4" y="387.1" textLength="17.7" lengthAdjust="spacingAndGlyphs" font-family="Liberation Mono" font-size="21" fill="#dadada" stroke="#dadada" stroke-width="0.2">19</text>
<text x="1091.1" y="387.1" textLength="17.7" lengthAdjust="spacingAndGlyphs" font-family="Liberation Mono" font-size="21" fill="#dadada" stroke="#dadada" stroke-width="0.2">2O</text>
<text x="1186.4" y="387.1" textLength="17.7" lengthAdjust="spacingAndGlyphs" font-family="Liberation Mono" font-size="21" fill="#dadada" stroke="#dadada" stroke-width="0.2">21</text>
<text x="1283.2" y="387.1" textLength="17.7" lengthAdjust="spacingAndGlyphs" font-family="Liberation Mono" font-size="21" fill="#dadada" stroke="#dadada" stroke-width="0.2">22</text>
<text x="1378.3" y="387.1" textLength="17.7" lengthAdjust="spacingAndGlyphs" font-family="Liberation Mono" font-size="21" fill="#dadada" stroke="#dadada" stroke-width="0.2">23</text>
<text x="1473.7" y="387.1" textLength="17.7" lengthAdjust="spacingAndGlyphs" font-family="Liberation Mono" font-size="21" fill="#dadada" stroke="#dadada" stroke-width="0.2">OO</text>
<text x="1570.3" y="387.1" textLength="17.7" lengthAdjust="spacingAndGlyphs" font-family="Liberation Mono" font-size="21" fill="#dadada" stroke="#dadada" stroke-width="0.2">O1</text>
<text x="1661.2" y="387.1" textLength="17.7" lengthAdjust="spacingAndGlyphs" font-family="Liberation Mono" font-size="21" fill="#dadada" stroke="#dadada" stroke-width="0.2">O2</text>
<text x="1737.5" y="387.1" textLength="17.7" lengthAdjust="spacingAndGlyphs" font-family="Liberation Mono" font-size="21" fill="#dadada" stroke="#dadada" stroke-width="0.2">O3</text>
<text x="1801.9" y="387.1" textLength="17.7" lengthAdjust="spacingAndGlyphs" font-family="Liberation Mono" font-size="21" fill="#dadada" stroke="#dadada" stroke-width="0.2">O4</text>
<text x="1878.2" y="387.1" textLength="17.7" lengthAdjust="spacingAndGlyphs" font-family="Liberation Mono" font-size="21" fill="#dadada" stroke="#dadada" stroke-width="0.2">O5</text>
<text x="1904.5" y="387.1" textLength="17.7" lengthAdjust="spacingAndGlyphs" font-family="Liberation Mono" font-size="21" fill="#dadada" stroke="#dadada" stroke-width="0.2">O6</text>
<text x="1473.7" y="363.3" textLength="17.7" lengthAdjust="spacingAndGlyphs" font-family="Liberation Mono" font-size="21" fill="#d6d6d6">22</text>
<text x="1933.6" y="117.8" textLength="46.7" lengthAdjust="spacingAndGlyphs" font-family="Liberation Mono" font-size="21" fill="#d6d6d6">8,O25</text>
<text x="1933.6" y="183.3" textLength="46.7" lengthAdjust="spacingAndGlyphs" font-family="Liberation Mono" font-size="21" fill="#d6d6d6">8,OOO</text>
<text x="1933.6" y="248.5" textLength="46.7" lengthAdjust="spacingAndGlyphs" font-family="Liberation Mono" font-size="21" fill="#d6d6d6">7,975</text>
<text x="1933.6" y="314.2" textLength="46.7" lengthAdjust="spacingAndGlyphs" font-family="Liberation Mono" font-size="21" fill="#d6d6d6">7,95O</text>
<text x="1933.6" y="380.5" textLength="46.7" lengthAdjust="spacingAndGlyphs" font-family="Liberation Mono" font-size="21" fill="#d6d6d6">7,925</text>
<rect x="1931.5" y="118.8" width="92.8" height="34.4" fill="#d4d4d4"/>
<text x="1951.8" y="140.4" textLength="49.5" lengthAdjust="spacingAndGlyphs" font-family="Liberation Mono" font-size="21" font-weight="bold" fill="#000">8,O2O</text>
<path transform="translate(13.7,81) scale(1.055,1.031)" d="M1,2.5 H6 V13 H1 Z M1,7.8 H6 M8,3.5 H15.5 M11.8,1 V6 M8,6 H15.5 M7.5,9 H16 M13.5,7 V14.5 Q13.5,16 11.5,15.5 M9.3,11 L10.5,13" fill="none" stroke="#dedede" stroke-width="1.45" stroke-linecap="square"/>
<path transform="translate(33,81) scale(1.055,1.031)" d="M5,0.5 V2 M1,2.5 H10 M5,3 L2,7 M2,7 H8 L2.5,12.5 M5.5,10 L9,13.5 M8,4.5 L3,10 M12,2.5 V12 M15,0.8 V14.5 Q15,16 13,15.5" fill="none" stroke="#dedede" stroke-width="1.45" stroke-linecap="square"/>
<text x="51.1" y="97" textLength="57.8" lengthAdjust="spacingAndGlyphs" font-family="Liberation Mono" font-size="21.5" font-weight="normal" fill="#dedede">:O6:OO</text>
<path transform="translate(119.7,81) scale(1.055,1.031)" d="M3.5,0.8 L1,8 H7.5 M5.5,5 Q5.5,12 1,15.5 M1.5,10 L7.5,14 M11.5,0.8 L9,6 H15.5 L13.5,4 M10,9 H15.5 V15 H10 Z" fill="none" stroke="#dedede" stroke-width="1.45" stroke-linecap="square"/>
<path transform="translate(139,81) scale(1.055,1.031)" d="M4.5,0.8 L1,7 M3,5 V16 M7,3 H16 M11.5,0.8 V4.5 M8.5,5 H14.5 V13 H8.5 Z M8.5,7.7 H14.5 M8.5,10.3 H14.5 M6.5,5 V15.5 H16" fill="none" stroke="#dedede" stroke-width="1.45" stroke-linecap="square"/>
<text x="157.1" y="97" textLength="57.8" lengthAdjust="spacingAndGlyphs" font-family="Liberation Mono" font-size="21.5" font-weight="normal" fill="#dedede">:8,O2O</text>
<path transform="translate(225.8,81) scale(1.055,1.031)" d="M8,0.3 V2 M1,2.3 H15 M5,4.3 H11 V7 H5 Z M2,9 V16 M2,9 H14 V15 Q14,16 12.5,16 M6,11 H10 V14 H6 Z" fill="none" stroke="#dedede" stroke-width="1.45" stroke-linecap="square"/>
<path transform="translate(245.1,81) scale(1.055,1.031)" d="M4.5,0.8 L1,7 M3,5 V16 M7,3 H16 M11.5,0.8 V4.5 M8.5,5 H14.5 V13 H8.5 Z M8.5,7.7 H14.5 M8.5,10.3 H14.5 M6.5,5 V15.5 H16" fill="none" stroke="#dedede" stroke-width="1.45" stroke-linecap="square"/>
<text x="263.1" y="97" textLength="57.8" lengthAdjust="spacingAndGlyphs" font-family="Liberation Mono" font-size="21.5" font-weight="normal" fill="#dedede">:8,O2O</text>
<path transform="translate(331.8,81) scale(1.055,1.031)" d="M8,0.3 V2.3 M1.5,5 V2.8 H14.5 V5 M7,5 L4.5,10 H14.5 M11.5,10 Q10.5,14 2,16 M5,12.3 L14,16 M1,9.5 H15" fill="none" stroke="#dedede" stroke-width="1.45" stroke-linecap="square"/>
<path transform="translate(351.1,81) scale(1.055,1.031)" d="M4.5,0.8 L1,7 M3,5 V16 M7,3 H16 M11.5,0.8 V4.5 M8.5,5 H14.5 V13 H8.5 Z M8.5,7.7 H14.5 M8.5,10.3 H14.5 M6.5,5 V15.5 H16" fill="none" stroke="#dedede" stroke-width="1.45" stroke-linecap="square"/>
<text x="369.2" y="97" textLength="57.8" lengthAdjust="spacingAndGlyphs" font-family="Liberation Mono" font-size="21.5" font-weight="normal" fill="#dedede">:8,O2O</text>
<path transform="translate(437.9,81) scale(1.055,1.031)" d="M4,0.8 L1,5.5 L6.5,5.5 M6,3.5 L1,10.5 H7 M4,10.5 V16 M1.3,13 L0.5,15.5 M6.5,13 L7.5,15.5 M11,0.8 L8.5,5.5 M10,3 H15 L9,10 M10.5,5.5 L16,9.5 M11,11 L13.5,12.3 M10,13.5 L14.5,15.5" fill="none" stroke="#dedede" stroke-width="1.45" stroke-linecap="square"/>
<path transform="translate(457.1,81) scale(1.055,1.031)" d="M4.5,0.8 L1,7 M3,5 V16 M7,3 H16 M11.5,0.8 V4.5 M8.5,5 H14.5 V13 H8.5 Z M8.5,7.7 H14.5 M8.5,10.3 H14.5 M6.5,5 V15.5 H16" fill="none" stroke="#dedede" stroke-width="1.45" stroke-linecap="square"/>
<text x="475.2" y="97" textLength="57.8" lengthAdjust="spacingAndGlyphs" font-family="Liberation Mono" font-size="21.5" font-weight="normal" fill="#dedede">:8,O2O</text>
<rect x="9" y="396" width="2016" height="1.4" fill="#a4a4a4"/><rect x="9" y="397.4" width="2016" height="4.6" fill="#f8f8f8"/><rect x="9" y="402" width="2016" height="1.6" fill="#a4a4a4"/>
<rect x="9.2" y="403.6" width="2015.1" height="418.8" fill="#1b1b1b"/>
<rect x="9.2" y="821.4" width="2015.1" height="1" fill="#0c0c0c"/>
<rect x="11" y="405.6" width="1919.8" height="391.6" fill="#000000"/>
<path d="M10.1,798.2 V404.7 H1931.7 V798.1 H10.1" fill="none" stroke="#e6e6e6" stroke-width="1.8"/>
<path d="M66.2,405.6 V797.2 M93,405.6 V797.2 M119.3,405.6 V797.2 M132,405.6 V797.2 M145.2,405.6 V797.2 M167.8,405.6 V797.2 M264.7,405.6 V797.2 M359.9,405.6 V797.2 M450.5,405.6 V797.2 M547.3,405.6 V797.2 M642.6,405.6 V797.2 M738,405.6 V797.2 M755,405.6 V797.2 M803.5,405.6 V797.2 M898.8,405.6 V797.2 M992.7,405.6 V797.2 M1089.4,405.6 V797.2 M1184.7,405.6 V797.2 M1281.5,405.6 V797.2 M1376.8,405.6 V797.2 M1472,405.6 V797.2 M1568.9,405.6 V797.2 M1659.5,405.6 V797.2 M1735.8,405.6 V797.2 M1800.2,405.6 V797.2 M1876.7,405.6 V797.2 M1928.1,405.6 V797.2 M11,449.2 H1930.8 M11,532.7 H1930.8 M11,615.9 H1930.8 M11,701 H1930.8 M11,783.8 H1930.8" fill="none" stroke="#a6a6a6" stroke-width="1.8" stroke-dasharray="1.7 1.46"/>
<path d="M146.6,405.6 V797.2" fill="none" stroke="#a6a6a6" stroke-width="1.5" stroke-dasharray="1.7 1.46"/>
<path d="M16.2,741.4h2.2v2h-2.2zM17.8,741.4h2.2v2h-2.2zM21,741.4h2.2v2h-2.2zM22.6,741.4h2.2v2h-2.2zM24.2,741.4h2.2v2h-2.2zM27.4,738h2.2v2h-2.2zM29,738h2.2v2h-2.2zM30.6,738h2.2v2h-2.2zM35.4,741.4h2.2v2h-2.2zM40.2,748.1h2.2v2h-2.2zM41.8,748.1h2.2v2h-2.2zM43.4,748.1h2.2v2h-2.2zM45,748.1h2.2v2h-2.2zM46.6,748.1h2.2v5.3h-2.2zM49.8,744.7h2.2v2h-2.2zM59.4,741.4h2.2v5.3h-2.2zM65.8,744.7h2.2v2h-2.2zM67.4,744.7h2.2v2h-2.2zM73.8,754.7h2.2v2h-2.2zM78.6,748.1h2.2v2h-2.2zM81.8,748.1h2.2v2h-2.2zM83.4,748.1h2.2v2h-2.2zM85,748.1h2.2v2h-2.2zM86.6,748.1h2.2v2h-2.2zM91.4,748.1h2.2v2h-2.2zM99.4,754.7h2.2v2h-2.2zM101,754.7h2.2v2h-2.2zM104.2,751.4h2.2v5.3h-2.2zM105.8,754.7h2.2v2h-2.2zM110.6,744.7h2.2v2h-2.2zM113.8,738h2.2v8.7h-2.2zM117,734.7h2.2v2h-2.2zM121.8,738h2.2v2h-2.2zM123.4,738h2.2v2h-2.2zM125,731.3h2.2v8.7h-2.2zM126.6,738h2.2v2h-2.2zM133,738h2.2v2h-2.2zM136.2,738h2.2v2h-2.2zM137.8,738h2.2v2h-2.2zM141,741.4h2.2v5.3h-2.2zM142.6,741.4h2.2v2h-2.2zM149,728h2.2v2h-2.2zM150.6,721.3h2.2v8.7h-2.2zM153.8,724.6h2.2v2h-2.2zM157,721.3h2.2v2h-2.2zM160.2,721.3h2.2v2h-2.2zM177.8,704.6h2.2v2h-2.2zM184.2,711.3h2.2v2h-2.2zM185.8,711.3h2.2v2h-2.2zM190.6,711.3h2.2v5.3h-2.2zM192.2,711.3h2.2v2h-2.2zM197,704.6h2.2v2h-2.2zM198.6,704.6h2.2v2h-2.2zM201.8,687.9h2.2v12h-2.2zM203.4,697.9h2.2v2h-2.2zM209.8,681.2h2.2v2h-2.2zM211.4,681.2h2.2v2h-2.2zM213,681.2h2.2v2h-2.2zM214.6,681.2h2.2v5.3h-2.2zM221,687.9h2.2v5.3h-2.2zM227.4,697.9h2.2v2h-2.2zM229,697.9h2.2v2h-2.2zM230.6,697.9h2.2v2h-2.2zM232.2,691.2h2.2v8.7h-2.2zM233.8,697.9h2.2v2h-2.2zM241.8,718h2.2v8.7h-2.2zM249.8,694.6h2.2v8.7h-2.2zM251.4,701.2h2.2v2h-2.2zM256.2,691.2h2.2v2h-2.2zM257.8,691.2h2.2v2h-2.2zM262.6,681.2h2.2v2h-2.2zM265.8,677.8h2.2v2h-2.2zM269,681.2h2.2v2h-2.2zM270.6,681.2h2.2v2h-2.2zM277,694.6h2.2v2h-2.2zM280.2,691.2h2.2v2h-2.2zM286.6,691.2h2.2v2h-2.2zM288.2,687.9h2.2v5.3h-2.2zM291.4,687.9h2.2v2h-2.2zM293,687.9h2.2v2h-2.2zM305.8,681.2h2.2v2h-2.2zM315.4,691.2h2.2v5.3h-2.2zM317,691.2h2.2v2h-2.2zM318.6,691.2h2.2v2h-2.2zM320.2,691.2h2.2v2h-2.2zM321.8,691.2h2.2v8.7h-2.2zM325,694.6h2.2v2h-2.2zM339.4,701.2h2.2v2h-2.2zM345.8,681.2h2.2v12h-2.2zM350.6,681.2h2.2v2h-2.2zM357,667.8h2.2v2h-2.2zM361.8,654.4h2.2v2h-2.2zM365,647.7h2.2v2h-2.2zM366.6,637.7h2.2v12h-2.2zM369.8,654.4h2.2v2h-2.2zM377.8,667.8h2.2v8.7h-2.2zM379.4,674.5h2.2v2h-2.2zM382.6,671.1h2.2v2h-2.2zM389,677.8h2.2v2h-2.2zM390.6,677.8h2.2v2h-2.2zM392.2,677.8h2.2v2h-2.2zM397,674.5h2.2v2h-2.2zM405,674.5h2.2v2h-2.2zM408.2,674.5h2.2v2h-2.2zM409.8,674.5h2.2v2h-2.2zM413,671.1h2.2v2h-2.2zM414.6,671.1h2.2v8.7h-2.2zM416.2,671.1h2.2v2h-2.2zM422.6,684.5h2.2v2h-2.2zM424.2,684.5h2.2v2h-2.2zM427.4,681.2h2.2v2h-2.2zM429,681.2h2.2v5.3h-2.2zM430.6,681.2h2.2v2h-2.2zM435.4,681.2h2.2v2h-2.2zM437,681.2h2.2v2h-2.2zM440.2,687.9h2.2v2h-2.2zM441.8,687.9h2.2v2h-2.2zM443.4,687.9h2.2v2h-2.2zM448.2,694.6h2.2v2h-2.2zM449.8,694.6h2.2v2h-2.2zM453,694.6h2.2v2h-2.2zM454.6,694.6h2.2v2h-2.2zM456.2,694.6h2.2v2h-2.2zM462.6,694.6h2.2v2h-2.2zM464.2,694.6h2.2v2h-2.2zM465.8,694.6h2.2v2h-2.2zM467.4,694.6h2.2v2h-2.2zM469,694.6h2.2v2h-2.2zM472.2,687.9h2.2v5.3h-2.2zM473.8,691.2h2.2v2h-2.2zM475.4,691.2h2.2v2h-2.2zM477,691.2h2.2v2h-2.2zM493,677.8h2.2v2h-2.2zM497.8,671.1h2.2v2h-2.2zM501,671.1h2.2v2h-2.2zM502.6,671.1h2.2v2h-2.2zM504.2,671.1h2.2v2h-2.2zM505.8,671.1h2.2v2h-2.2zM507.4,671.1h2.2v2h-2.2zM509,671.1h2.2v2h-2.2zM512.2,674.5h2.2v2h-2.2zM515.4,677.8h2.2v2h-2.2zM517,677.8h2.2v2h-2.2zM520.2,681.2h2.2v2h-2.2zM521.8,681.2h2.2v2h-2.2zM525,684.5h2.2v2h-2.2zM526.6,684.5h2.2v2h-2.2zM528.2,684.5h2.2v2h-2.2zM529.8,684.5h2.2v2h-2.2zM531.4,681.2h2.2v5.3h-2.2zM533,684.5h2.2v2h-2.2zM536.2,691.2h2.2v2h-2.2zM547.4,694.6h2.2v2h-2.2zM555.4,691.2h2.2v2h-2.2zM557,691.2h2.2v2h-2.2zM558.6,691.2h2.2v2h-2.2zM565,687.9h2.2v2h-2.2zM566.6,687.9h2.2v8.7h-2.2zM568.2,687.9h2.2v2h-2.2zM571.4,681.2h2.2v5.3h-2.2zM573,684.5h2.2v2h-2.2zM574.6,681.2h2.2v5.3h-2.2zM576.2,684.5h2.2v2h-2.2zM581,687.9h2.2v2h-2.2zM584.2,691.2h2.2v2h-2.2zM585.8,691.2h2.2v5.3h-2.2zM587.4,691.2h2.2v2h-2.2zM593.8,697.9h2.2v2h-2.2zM598.6,701.2h2.2v2h-2.2zM600.2,701.2h2.2v2h-2.2zM601.8,701.2h2.2v2h-2.2zM605,697.9h2.2v2h-2.2zM606.6,697.9h2.2v8.7h-2.2zM608.2,697.9h2.2v2h-2.2zM611.4,707.9h2.2v2h-2.2zM613,707.9h2.2v2h-2.2zM619.4,704.6h2.2v2h-2.2zM624.2,697.9h2.2v2h-2.2zM625.8,697.9h2.2v2h-2.2zM627.4,697.9h2.2v2h-2.2zM630.6,697.9h2.2v2h-2.2zM632.2,697.9h2.2v2h-2.2zM633.8,697.9h2.2v2h-2.2zM637,697.9h2.2v2h-2.2zM640.2,694.6h2.2v2h-2.2zM641.8,694.6h2.2v2h-2.2zM645,694.6h2.2v2h-2.2zM646.6,687.9h2.2v8.7h-2.2zM648.2,694.6h2.2v2h-2.2zM649.8,691.2h2.2v5.3h-2.2zM654.6,694.6h2.2v2h-2.2zM657.8,701.2h2.2v2h-2.2zM659.4,701.2h2.2v2h-2.2zM661,701.2h2.2v8.7h-2.2zM664.2,694.6h2.2v2h-2.2zM669,691.2h2.2v2h-2.2zM672.2,687.9h2.2v2h-2.2zM678.6,691.2h2.2v2h-2.2zM681.8,691.2h2.2v2h-2.2zM683.4,691.2h2.2v2h-2.2zM686.6,697.9h2.2v2h-2.2zM689.8,707.9h2.2v2h-2.2zM701,738h2.2v2h-2.2zM704.2,741.4h2.2v2h-2.2zM709,748.1h2.2v2h-2.2zM710.6,748.1h2.2v8.7h-2.2zM715.4,748.1h2.2v8.7h-2.2zM723.4,761.4h2.2v2h-2.2zM744.2,741.4h2.2v2h-2.2zM745.8,741.4h2.2v2h-2.2zM749,744.7h2.2v2h-2.2zM750.6,744.7h2.2v2h-2.2zM755.4,731.3h2.2v8.7h-2.2zM757,647.7h2.2v2h-2.2zM758.6,641h2.2v8.7h-2.2zM765,634.4h2.2v8.7h-2.2zM771.4,624.3h2.2v2h-2.2zM774.6,621h2.2v2h-2.2zM777.8,617.6h2.2v2h-2.2zM779.4,617.6h2.2v2h-2.2zM781,617.6h2.2v5.3h-2.2zM782.6,617.6h2.2v2h-2.2zM785.8,621h2.2v8.7h-2.2zM787.4,621h2.2v2h-2.2zM789,621h2.2v2h-2.2zM798.6,590.9h2.2v5.3h-2.2zM800.2,590.9h2.2v2h-2.2zM801.8,590.9h2.2v2h-2.2zM806.6,604.3h2.2v8.7h-2.2zM809.8,611h2.2v2h-2.2zM813,617.6h2.2v2h-2.2zM814.6,617.6h2.2v2h-2.2zM824.2,594.2h2.2v2h-2.2zM825.8,594.2h2.2v2h-2.2zM829,597.6h2.2v2h-2.2zM830.6,594.2h2.2v5.3h-2.2zM832.2,597.6h2.2v2h-2.2zM835.4,597.6h2.2v2h-2.2zM837,597.6h2.2v2h-2.2zM838.6,597.6h2.2v2h-2.2zM846.6,577.5h2.2v5.3h-2.2zM848.2,580.9h2.2v2h-2.2zM849.8,580.9h2.2v2h-2.2zM851.4,580.9h2.2v2h-2.2zM854.6,584.2h2.2v2h-2.2zM861,587.5h2.2v2h-2.2zM865.8,590.9h2.2v2h-2.2zM867.4,590.9h2.2v5.3h-2.2zM872.2,580.9h2.2v2h-2.2zM873.8,580.9h2.2v5.3h-2.2zM875.4,580.9h2.2v2h-2.2zM877,580.9h2.2v5.3h-2.2zM880.2,580.9h2.2v8.7h-2.2zM885,587.5h2.2v8.7h-2.2zM886.6,587.5h2.2v5.3h-2.2zM891.4,587.5h2.2v2h-2.2zM893,587.5h2.2v2h-2.2zM894.6,587.5h2.2v2h-2.2zM897.8,594.2h2.2v2h-2.2zM899.4,594.2h2.2v2h-2.2zM905.8,604.3h2.2v2h-2.2zM907.4,604.3h2.2v2h-2.2zM909,604.3h2.2v2h-2.2zM910.6,604.3h2.2v2h-2.2zM912.2,604.3h2.2v5.3h-2.2zM913.8,604.3h2.2v2h-2.2zM915.4,604.3h2.2v2h-2.2zM918.6,600.9h2.2v8.7h-2.2zM921.8,597.6h2.2v2h-2.2zM925,594.2h2.2v2h-2.2zM929.8,587.5h2.2v2h-2.2zM931.4,587.5h2.2v2h-2.2zM934.6,587.5h2.2v2h-2.2zM936.2,587.5h2.2v2h-2.2zM937.8,587.5h2.2v2h-2.2zM942.6,590.9h2.2v2h-2.2zM945.8,590.9h2.2v2h-2.2zM949,580.9h2.2v2h-2.2zM950.6,580.9h2.2v5.3h-2.2zM955.4,574.2h2.2v5.3h-2.2zM957,574.2h2.2v5.3h-2.2zM958.6,577.5h2.2v2h-2.2zM960.2,577.5h2.2v2h-2.2zM963.4,574.2h2.2v2h-2.2zM966.6,574.2h2.2v2h-2.2zM968.2,574.2h2.2v2h-2.2zM973,577.5h2.2v2h-2.2zM976.2,577.5h2.2v2h-2.2zM977.8,577.5h2.2v2h-2.2zM979.4,577.5h2.2v2h-2.2zM982.6,580.9h2.2v2h-2.2zM985.8,587.5h2.2v2h-2.2zM989,587.5h2.2v2h-2.2zM990.6,587.5h2.2v8.7h-2.2zM995.4,590.9h2.2v2h-2.2zM998.6,590.9h2.2v2h-2.2zM1001.8,584.2h2.2v5.3h-2.2zM1005,587.5h2.2v2h-2.2zM1008.2,584.2h2.2v2h-2.2zM1013,594.2h2.2v2h-2.2zM1016.2,590.9h2.2v5.3h-2.2zM1017.8,594.2h2.2v2h-2.2zM1021,594.2h2.2v2h-2.2zM1022.6,594.2h2.2v2h-2.2zM1024.2,594.2h2.2v2h-2.2zM1027.4,600.9h2.2v2h-2.2zM1035.4,617.6h2.2v2h-2.2zM1038.6,614.3h2.2v2h-2.2zM1041.8,611h2.2v2h-2.2zM1045,604.3h2.2v2h-2.2zM1048.2,597.6h2.2v2h-2.2zM1051.4,604.3h2.2v2h-2.2zM1054.6,604.3h2.2v2h-2.2zM1057.8,611h2.2v2h-2.2zM1059.4,611h2.2v2h-2.2zM1061,611h2.2v2h-2.2zM1062.6,611h2.2v2h-2.2zM1064.2,611h2.2v2h-2.2zM1065.8,611h2.2v2h-2.2zM1069,611h2.2v2h-2.2zM1070.6,604.3h2.2v8.7h-2.2zM1072.2,611h2.2v2h-2.2zM1073.8,611h2.2v2h-2.2zM1077,607.6h2.2v2h-2.2zM1078.6,607.6h2.2v2h-2.2zM1083.4,600.9h2.2v2h-2.2zM1089.8,604.3h2.2v2h-2.2zM1091.4,604.3h2.2v2h-2.2zM1093,604.3h2.2v2h-2.2zM1094.6,604.3h2.2v2h-2.2zM1096.2,604.3h2.2v5.3h-2.2zM1101,611h2.2v2h-2.2zM1104.2,611h2.2v2h-2.2zM1107.4,611h2.2v2h-2.2zM1109,611h2.2v2h-2.2zM1110.6,607.6h2.2v5.3h-2.2zM1113.8,607.6h2.2v2h-2.2zM1117,600.9h2.2v2h-2.2zM1120.2,607.6h2.2v2h-2.2zM1121.8,604.3h2.2v5.3h-2.2zM1123.4,607.6h2.2v2h-2.2zM1126.6,604.3h2.2v2h-2.2zM1128.2,604.3h2.2v2h-2.2zM1131.4,604.3h2.2v5.3h-2.2zM1136.2,594.2h2.2v5.3h-2.2zM1139.4,594.2h2.2v2h-2.2zM1142.6,594.2h2.2v2h-2.2zM1145.8,590.9h2.2v5.3h-2.2zM1149,587.5h2.2v2h-2.2zM1150.6,587.5h2.2v2h-2.2zM1153.8,590.9h2.2v2h-2.2zM1157,597.6h2.2v2h-2.2zM1158.6,597.6h2.2v2h-2.2zM1163.4,597.6h2.2v2h-2.2zM1165,594.2h2.2v5.3h-2.2zM1166.6,597.6h2.2v2h-2.2zM1168.2,597.6h2.2v2h-2.2zM1169.8,597.6h2.2v2h-2.2zM1171.4,597.6h2.2v2h-2.2zM1174.6,597.6h2.2v2h-2.2zM1177.8,597.6h2.2v2h-2.2zM1179.4,597.6h2.2v2h-2.2zM1181,597.6h2.2v2h-2.2zM1185.8,584.2h2.2v2h-2.2zM1187.4,584.2h2.2v2h-2.2zM1189,584.2h2.2v2h-2.2zM1197,580.9h2.2v2h-2.2zM1198.6,580.9h2.2v2h-2.2zM1200.2,580.9h2.2v2h-2.2zM1205,590.9h2.2v2h-2.2zM1206.6,590.9h2.2v2h-2.2zM1209.8,584.2h2.2v2h-2.2zM1211.4,584.2h2.2v2h-2.2zM1213,580.9h2.2v5.3h-2.2zM1216.2,577.5h2.2v2h-2.2zM1217.8,577.5h2.2v2h-2.2zM1219.4,577.5h2.2v2h-2.2zM1221,577.5h2.2v2h-2.2zM1224.2,577.5h2.2v2h-2.2zM1229,577.5h2.2v2h-2.2zM1230.6,577.5h2.2v2h-2.2zM1232.2,577.5h2.2v2h-2.2zM1237,574.2h2.2v2h-2.2zM1238.6,574.2h2.2v2h-2.2zM1251.4,611h2.2v2h-2.2zM1254.6,611h2.2v2h-2.2zM1259.4,604.3h2.2v2h-2.2zM1264.2,597.6h2.2v2h-2.2zM1265.8,597.6h2.2v2h-2.2zM1267.4,597.6h2.2v2h-2.2zM1270.6,597.6h2.2v8.7h-2.2zM1272.2,597.6h2.2v2h-2.2zM1275.4,594.2h2.2v2h-2.2zM1277,594.2h2.2v2h-2.2zM1278.6,590.9h2.2v5.3h-2.2zM1280.2,594.2h2.2v2h-2.2zM1283.4,594.2h2.2v2h-2.2zM1285,590.9h2.2v5.3h-2.2zM1289.8,590.9h2.2v8.7h-2.2zM1294.6,597.6h2.2v2h-2.2zM1297.8,604.3h2.2v2h-2.2zM1302.6,604.3h2.2v2h-2.2zM1304.2,604.3h2.2v2h-2.2zM1305.8,604.3h2.2v2h-2.2zM1307.4,604.3h2.2v2h-2.2zM1325,607.6h2.2v2h-2.2zM1326.6,607.6h2.2v2h-2.2zM1333,604.3h2.2v2h-2.2zM1344.2,557.4h2.2v8.7h-2.2zM1345.8,557.4h2.2v2h-2.2zM1355.4,530.7h2.2v2h-2.2zM1358.6,514h2.2v8.7h-2.2zM1366.6,510.6h2.2v2h-2.2zM1368.2,510.6h2.2v2h-2.2zM1371.4,500.6h2.2v5.3h-2.2zM1376.2,503.9h2.2v8.7h-2.2zM1379.4,510.6h2.2v2h-2.2zM1384.2,520.7h2.2v2h-2.2zM1387.4,514h2.2v12h-2.2zM1392.2,537.4h2.2v8.7h-2.2zM1401.8,544.1h2.2v2h-2.2zM1406.6,534h2.2v2h-2.2zM1413,517.3h2.2v2h-2.2zM1433.8,470.5h2.2v2h-2.2zM1437,463.8h2.2v5.3h-2.2zM1446.6,433.7h2.2v2h-2.2zM1451.4,433.7h2.2v8.7h-2.2zM1457.8,443.8h2.2v8.7h-2.2zM1469,460.5h2.2v2h-2.2zM1470.6,460.5h2.2v2h-2.2zM1475.4,450.4h2.2v2h-2.2zM1478.6,443.8h2.2v2h-2.2zM1480.2,443.8h2.2v2h-2.2zM1493,467.2h2.2v2h-2.2zM1494.6,467.2h2.2v2h-2.2zM1496.2,460.5h2.2v8.7h-2.2zM1499.4,470.5h2.2v2h-2.2zM1504.2,470.5h2.2v2h-2.2zM1507.4,473.8h2.2v8.7h-2.2zM1520.2,447.1h2.2v2h-2.2zM1529.8,467.2h2.2v2h-2.2zM1531.4,467.2h2.2v2h-2.2zM1537.8,487.2h2.2v2h-2.2zM1553.8,534h2.2v2h-2.2zM1558.6,534h2.2v2h-2.2zM1560.2,534h2.2v2h-2.2zM1561.8,534h2.2v2h-2.2zM1563.4,534h2.2v2h-2.2z" fill="#f0ec88"/>
<path d="M33.8,739h2.2v3.3h-2.2zM69,745.7h2.2v10h-2.2zM163.4,715.6h2.2v3.3h-2.2zM166.6,715.6h2.2v13.4h-2.2zM168.2,729h2.2v10h-2.2zM169.8,739h2.2v3.3h-2.2zM176.2,702.2h2.2v3.3h-2.2zM179.4,705.6h2.2v10h-2.2zM182.6,708.9h2.2v3.3h-2.2zM208.2,675.5h2.2v10h-2.2zM216.2,682.2h2.2v3.3h-2.2zM219.4,682.2h2.2v6.7h-2.2zM222.6,688.9h2.2v6.7h-2.2zM225.8,692.2h2.2v6.7h-2.2zM235.4,698.9h2.2v10h-2.2zM237,702.2h2.2v3.3h-2.2zM238.6,705.6h2.2v10h-2.2zM240.2,708.9h2.2v10h-2.2zM272.2,682.2h2.2v6.7h-2.2zM273.8,688.9h2.2v3.3h-2.2zM275.4,692.2h2.2v3.3h-2.2zM283.4,688.9h2.2v6.7h-2.2zM301,672.1h2.2v3.3h-2.2zM302.6,668.8h2.2v10h-2.2zM304.2,678.8h2.2v3.3h-2.2zM309,682.2h2.2v6.7h-2.2zM310.6,688.9h2.2v6.7h-2.2zM312.2,695.6h2.2v6.7h-2.2zM323.4,692.2h2.2v3.3h-2.2zM328.2,688.9h2.2v6.7h-2.2zM331.4,692.2h2.2v3.3h-2.2zM333,695.6h2.2v3.3h-2.2zM336.2,695.6h2.2v3.3h-2.2zM337.8,695.6h2.2v6.7h-2.2zM342.6,688.9h2.2v6.7h-2.2zM368.2,645.4h2.2v10h-2.2zM371.4,655.4h2.2v10h-2.2zM374.6,662.1h2.2v10h-2.2zM376.2,672.1h2.2v10h-2.2zM384.2,672.1h2.2v6.7h-2.2zM385.8,672.1h2.2v10h-2.2zM395.4,672.1h2.2v6.7h-2.2zM398.6,668.8h2.2v10h-2.2zM417.8,672.1h2.2v13.4h-2.2zM419.4,678.8h2.2v10h-2.2zM438.6,682.2h2.2v6.7h-2.2zM446.6,682.2h2.2v13.4h-2.2zM486.6,682.2h2.2v3.3h-2.2zM513.8,672.1h2.2v6.7h-2.2zM518.6,678.8h2.2v3.3h-2.2zM523.4,682.2h2.2v3.3h-2.2zM534.6,685.5h2.2v6.7h-2.2zM579.4,685.5h2.2v3.3h-2.2zM582.6,688.9h2.2v3.3h-2.2zM589,692.2h2.2v6.7h-2.2zM595.4,698.9h2.2v3.3h-2.2zM609.8,692.2h2.2v16.7h-2.2zM656.2,695.6h2.2v6.7h-2.2zM673.8,688.9h2.2v13.4h-2.2zM685,692.2h2.2v13.4h-2.2zM688.2,698.9h2.2v10h-2.2zM691.4,708.9h2.2v10h-2.2zM693,715.6h2.2v3.3h-2.2zM699.4,729h2.2v10h-2.2zM702.6,739h2.2v3.3h-2.2zM712.2,742.4h2.2v10h-2.2zM713.8,752.4h2.2v3.3h-2.2zM717,749.1h2.2v16.7h-2.2zM718.6,765.8h2.2v10h-2.2zM729.8,745.7h2.2v3.3h-2.2zM731.4,749.1h2.2v3.3h-2.2zM736.2,755.7h2.2v3.3h-2.2zM747.4,742.4h2.2v10h-2.2zM761.8,638.7h2.2v6.7h-2.2zM769.8,608.6h2.2v16.7h-2.2zM784.2,618.6h2.2v3.3h-2.2zM803.4,591.9h2.2v6.7h-2.2zM805,598.6h2.2v6.7h-2.2zM808.2,605.3h2.2v6.7h-2.2zM811.4,612h2.2v6.7h-2.2zM827.4,591.9h2.2v6.7h-2.2zM845,575.2h2.2v6.7h-2.2zM853,581.9h2.2v3.3h-2.2zM859.4,585.2h2.2v3.3h-2.2zM883.4,581.9h2.2v6.7h-2.2zM889.8,585.2h2.2v3.3h-2.2zM896.2,588.5h2.2v10h-2.2zM904.2,601.9h2.2v3.3h-2.2zM939.4,588.5h2.2v3.3h-2.2zM969.8,575.2h2.2v6.7h-2.2zM981,578.5h2.2v3.3h-2.2zM984.2,581.9h2.2v6.7h-2.2zM993.8,588.5h2.2v3.3h-2.2zM1009.8,585.2h2.2v3.3h-2.2zM1025.8,595.2h2.2v13.4h-2.2zM1029,601.9h2.2v6.7h-2.2zM1030.6,608.6h2.2v6.7h-2.2zM1032.2,615.3h2.2v10h-2.2zM1085,601.9h2.2v6.7h-2.2zM1097.8,605.3h2.2v13.4h-2.2zM1118.6,601.9h2.2v6.7h-2.2zM1155.4,591.9h2.2v6.7h-2.2zM1201.8,581.9h2.2v3.3h-2.2zM1203.4,585.2h2.2v6.7h-2.2zM1240.2,571.8h2.2v13.4h-2.2zM1241.8,585.2h2.2v3.3h-2.2zM1243.4,588.5h2.2v3.3h-2.2zM1245,591.9h2.2v3.3h-2.2zM1246.6,595.2h2.2v6.7h-2.2zM1249.8,605.3h2.2v6.7h-2.2zM1288.2,595.2h2.2v3.3h-2.2zM1296.2,598.6h2.2v6.7h-2.2zM1309,605.3h2.2v10h-2.2zM1312.2,615.3h2.2v10h-2.2zM1313.8,625.3h2.2v6.7h-2.2zM1315.4,632h2.2v6.7h-2.2zM1323.4,601.9h2.2v6.7h-2.2zM1328.2,608.6h2.2v6.7h-2.2zM1352.2,541.7h2.2v6.7h-2.2zM1360.2,518.3h2.2v6.7h-2.2zM1373,504.9h2.2v3.3h-2.2zM1374.6,508.3h2.2v3.3h-2.2zM1381,511.6h2.2v6.7h-2.2zM1382.6,518.3h2.2v10h-2.2zM1385.8,521.7h2.2v3.3h-2.2zM1389,525h2.2v6.7h-2.2zM1390.6,531.7h2.2v13.4h-2.2zM1395.4,541.7h2.2v10h-2.2zM1397,551.8h2.2v3.3h-2.2zM1419.4,488.2h2.2v13.4h-2.2zM1424.2,484.9h2.2v6.7h-2.2zM1427.4,484.9h2.2v3.3h-2.2zM1443.4,421.3h2.2v3.3h-2.2zM1445,424.7h2.2v10h-2.2zM1448.2,434.7h2.2v10h-2.2zM1453,434.7h2.2v16.7h-2.2zM1454.6,444.8h2.2v6.7h-2.2zM1459.4,451.4h2.2v13.4h-2.2zM1462.6,461.5h2.2v6.7h-2.2zM1467.4,458.1h2.2v10h-2.2zM1473.8,448.1h2.2v3.3h-2.2zM1481.8,438.1h2.2v13.4h-2.2zM1485,444.8h2.2v13.4h-2.2zM1486.6,458.1h2.2v3.3h-2.2zM1489.8,458.1h2.2v3.3h-2.2zM1491.4,461.5h2.2v6.7h-2.2zM1502.6,468.2h2.2v3.3h-2.2zM1505.8,471.5h2.2v3.3h-2.2zM1513.8,444.8h2.2v10h-2.2zM1517,448.1h2.2v3.3h-2.2zM1521.8,448.1h2.2v10h-2.2zM1526.6,451.4h2.2v10h-2.2zM1528.2,461.5h2.2v6.7h-2.2zM1533,468.2h2.2v10h-2.2zM1534.6,478.2h2.2v6.7h-2.2zM1536.2,484.9h2.2v3.3h-2.2zM1539.4,488.2h2.2v6.7h-2.2zM1541,494.9h2.2v10h-2.2zM1542.6,504.9h2.2v3.3h-2.2zM1544.2,508.3h2.2v6.7h-2.2zM1547.4,508.3h2.2v10h-2.2zM1549,518.3h2.2v6.7h-2.2zM1552.2,528.4h2.2v13.4h-2.2zM1555.4,535h2.2v3.3h-2.2zM1565,535h2.2v6.7h-2.2zM1566.6,541.7h2.2v3.3h-2.2zM1568.2,545.1h2.2v10h-2.2z" fill="#0a7ef2"/>
<path d="M14.6,742.4h2.2v3.3h-2.2zM25.8,739h2.2v3.3h-2.2zM75.4,749.1h2.2v6.7h-2.2zM109,745.7h2.2v3.3h-2.2zM112.2,739h2.2v6.7h-2.2zM115.4,735.7h2.2v3.3h-2.2zM145.8,739h2.2v3.3h-2.2zM147.4,729h2.2v10h-2.2zM152.2,725.6h2.2v3.3h-2.2zM155.4,722.3h2.2v3.3h-2.2zM161.8,715.6h2.2v6.7h-2.2zM165,715.6h2.2v3.3h-2.2zM171.4,725.6h2.2v16.7h-2.2zM173,715.6h2.2v10h-2.2zM174.6,702.2h2.2v13.4h-2.2zM181,708.9h2.2v6.7h-2.2zM187.4,708.9h2.2v3.3h-2.2zM193.8,708.9h2.2v3.3h-2.2zM195.4,705.6h2.2v3.3h-2.2zM200.2,698.9h2.2v6.7h-2.2zM205,692.2h2.2v6.7h-2.2zM206.6,675.5h2.2v16.7h-2.2zM224.2,692.2h2.2v10h-2.2zM243.4,715.6h2.2v3.3h-2.2zM245,712.3h2.2v3.3h-2.2zM246.6,705.6h2.2v6.7h-2.2zM248.2,698.9h2.2v6.7h-2.2zM253,698.9h2.2v3.3h-2.2zM254.6,685.5h2.2v13.4h-2.2zM259.4,685.5h2.2v6.7h-2.2zM264.2,678.8h2.2v3.3h-2.2zM281.8,688.9h2.2v3.3h-2.2zM285,692.2h2.2v10h-2.2zM289.8,685.5h2.2v6.7h-2.2zM294.6,678.8h2.2v10h-2.2zM296.2,672.1h2.2v16.7h-2.2zM297.8,662.1h2.2v10h-2.2zM313.8,692.2h2.2v10h-2.2zM326.6,688.9h2.2v6.7h-2.2zM329.8,692.2h2.2v3.3h-2.2zM334.6,695.6h2.2v3.3h-2.2zM341,692.2h2.2v10h-2.2zM344.2,692.2h2.2v3.3h-2.2zM347.4,685.5h2.2v6.7h-2.2zM349,682.2h2.2v3.3h-2.2zM352.2,665.5h2.2v16.7h-2.2zM353.8,668.8h2.2v3.3h-2.2zM358.6,662.1h2.2v13.4h-2.2zM360.2,655.4h2.2v10h-2.2zM363.4,648.7h2.2v6.7h-2.2zM373,662.1h2.2v3.3h-2.2zM381,672.1h2.2v3.3h-2.2zM387.4,678.8h2.2v3.3h-2.2zM393.8,672.1h2.2v6.7h-2.2zM400.2,675.5h2.2v3.3h-2.2zM411.4,672.1h2.2v3.3h-2.2zM425.8,682.2h2.2v3.3h-2.2zM470.6,692.2h2.2v6.7h-2.2zM489.8,682.2h2.2v3.3h-2.2zM491.4,675.5h2.2v6.7h-2.2zM496.2,672.1h2.2v3.3h-2.2zM544.2,695.6h2.2v3.3h-2.2zM560.2,688.9h2.2v3.3h-2.2zM569.8,685.5h2.2v6.7h-2.2zM603.4,698.9h2.2v3.3h-2.2zM616.2,705.6h2.2v3.3h-2.2zM667.4,692.2h2.2v3.3h-2.2zM670.6,688.9h2.2v3.3h-2.2zM677,692.2h2.2v3.3h-2.2zM720.2,765.8h2.2v6.7h-2.2zM721.8,755.7h2.2v13.4h-2.2zM725,752.4h2.2v16.7h-2.2zM726.6,749.1h2.2v6.7h-2.2zM728.2,742.4h2.2v6.7h-2.2zM734.6,755.7h2.2v6.7h-2.2zM737.8,752.4h2.2v6.7h-2.2zM739.4,749.1h2.2v3.3h-2.2zM742.6,742.4h2.2v6.7h-2.2zM752.2,739h2.2v6.7h-2.2zM753.8,739h2.2v3.3h-2.2zM760.2,632h2.2v16.7h-2.2zM763.4,635.4h2.2v13.4h-2.2zM766.6,625.3h2.2v10h-2.2zM768.2,608.6h2.2v16.7h-2.2zM773,622h2.2v3.3h-2.2zM790.6,615.3h2.2v6.7h-2.2zM792.2,608.6h2.2v6.7h-2.2zM793.8,595.2h2.2v13.4h-2.2zM795.4,598.6h2.2v6.7h-2.2zM797,585.2h2.2v13.4h-2.2zM816.2,615.3h2.2v6.7h-2.2zM817.8,601.9h2.2v13.4h-2.2zM819.4,598.6h2.2v3.3h-2.2zM821,595.2h2.2v3.3h-2.2zM840.2,588.5h2.2v10h-2.2zM841.8,581.9h2.2v6.7h-2.2zM843.4,575.2h2.2v6.7h-2.2zM869,588.5h2.2v3.3h-2.2zM870.6,581.9h2.2v6.7h-2.2zM888.2,585.2h2.2v3.3h-2.2zM917,601.9h2.2v6.7h-2.2zM920.2,598.6h2.2v3.3h-2.2zM926.6,588.5h2.2v6.7h-2.2zM947.4,581.9h2.2v10h-2.2zM971.4,578.5h2.2v3.3h-2.2zM1000.2,588.5h2.2v3.3h-2.2zM1006.6,585.2h2.2v3.3h-2.2zM1040.2,612h2.2v3.3h-2.2zM1043.4,605.3h2.2v6.7h-2.2zM1046.6,598.6h2.2v6.7h-2.2zM1075.4,608.6h2.2v3.3h-2.2zM1115.4,601.9h2.2v6.7h-2.2zM1125,605.3h2.2v3.3h-2.2zM1133,598.6h2.2v6.7h-2.2zM1137.8,595.2h2.2v3.3h-2.2zM1147.4,588.5h2.2v6.7h-2.2zM1182.6,591.9h2.2v6.7h-2.2zM1184.2,581.9h2.2v10h-2.2zM1190.6,581.9h2.2v3.3h-2.2zM1208.2,585.2h2.2v6.7h-2.2zM1214.6,578.5h2.2v6.7h-2.2zM1235.4,571.8h2.2v6.7h-2.2zM1256.2,608.6h2.2v3.3h-2.2zM1257.8,605.3h2.2v3.3h-2.2zM1273.8,595.2h2.2v3.3h-2.2zM1317,632h2.2v6.7h-2.2zM1318.6,625.3h2.2v6.7h-2.2zM1320.2,615.3h2.2v16.7h-2.2zM1321.8,601.9h2.2v13.4h-2.2zM1334.6,585.2h2.2v20.1h-2.2zM1336.2,575.2h2.2v10h-2.2zM1337.8,571.8h2.2v3.3h-2.2zM1339.4,561.8h2.2v10h-2.2zM1342.6,558.4h2.2v3.3h-2.2zM1347.4,551.8h2.2v13.4h-2.2zM1349,548.4h2.2v3.3h-2.2zM1350.6,541.7h2.2v6.7h-2.2zM1357,515h2.2v16.7h-2.2zM1361.8,521.7h2.2v3.3h-2.2zM1363.4,518.3h2.2v3.3h-2.2zM1365,511.6h2.2v6.7h-2.2zM1369.8,501.6h2.2v10h-2.2zM1393.8,541.7h2.2v13.4h-2.2zM1398.6,545.1h2.2v10h-2.2zM1403.4,541.7h2.2v3.3h-2.2zM1405,535h2.2v10h-2.2zM1408.2,528.4h2.2v6.7h-2.2zM1409.8,525h2.2v13.4h-2.2zM1411.4,518.3h2.2v6.7h-2.2zM1416.2,494.9h2.2v6.7h-2.2zM1417.8,481.5h2.2v13.4h-2.2zM1421,491.6h2.2v3.3h-2.2zM1425.8,474.8h2.2v13.4h-2.2zM1429,484.9h2.2v3.3h-2.2zM1430.6,478.2h2.2v6.7h-2.2zM1432.2,471.5h2.2v6.7h-2.2zM1435.4,464.8h2.2v6.7h-2.2zM1438.6,451.4h2.2v16.7h-2.2zM1440.2,431.4h2.2v20.1h-2.2zM1441.8,414.7h2.2v16.7h-2.2zM1449.8,434.7h2.2v6.7h-2.2zM1461,461.5h2.2v3.3h-2.2zM1464.2,461.5h2.2v13.4h-2.2zM1465.8,458.1h2.2v3.3h-2.2zM1472.2,448.1h2.2v13.4h-2.2zM1477,434.7h2.2v16.7h-2.2zM1483.4,444.8h2.2v6.7h-2.2zM1488.2,458.1h2.2v3.3h-2.2zM1501,468.2h2.2v3.3h-2.2zM1509,464.8h2.2v10h-2.2zM1510.6,458.1h2.2v6.7h-2.2zM1512.2,451.4h2.2v6.7h-2.2zM1515.4,448.1h2.2v10h-2.2zM1518.6,448.1h2.2v3.3h-2.2zM1523.4,454.8h2.2v13.4h-2.2zM1545.8,501.6h2.2v13.4h-2.2zM1557,535h2.2v3.3h-2.2zM1569.8,551.8h2.2v3.3h-2.2z" fill="#ff0000"/>
<path d="M1570,547.3h3.6v2h-3.6zM1575.5,570.9h3.6v2h-3.6zM1579.1,562.7h3.6v2h-3.6zM1586.4,600h3.6v2h-3.6zM1591.9,582.7h3.6v2h-3.6zM1595.5,582.7h3.6v2h-3.6zM1597.3,577.3h3.6v2h-3.6zM1601,577.3h3.6v2h-3.6zM1604.6,573.6h3.6v2h-3.6zM1606.4,582.7h3.6v2h-3.6zM1610.1,582.7h3.6v2h-3.6zM1611.9,580h3.6v2h-3.6zM1622.8,562.7h3.6v2h-3.6zM1626.4,573.6h3.6v2h-3.6zM1629.2,577.3h3.6v2h-3.6zM1639.2,582.7h3.6v2h-3.6zM1667.4,559.1h3.6v2h-3.6zM1671.9,562.7h3.6v2h-3.6zM1675.6,539.1h3.6v2h-3.6zM1679.2,533.6h3.6v2h-3.6zM1684.7,533.6h3.6v2h-3.6zM1686.5,543.6h3.6v2h-3.6zM1692.9,543.6h3.6v2h-3.6zM1695.6,536.3h3.6v2h-3.6zM1701.1,547.3h3.6v2h-3.6zM1703.8,553.6h3.6v2h-3.6zM1706.5,559.1h3.6v2h-3.6zM1712.9,573.6h3.6v2h-3.6zM1713.8,577.3h3.6v2h-3.6zM1722,573.6h3.6v2h-3.6zM1735.7,559.1h3.6v2h-3.6zM1742.9,550h3.6v2h-3.6zM1748.4,553.6h3.6v2h-3.6zM1757.5,553.6h3.6v2h-3.6zM1766.6,547.3h3.6v2h-3.6zM1770.2,544.5h3.6v2h-3.6zM1773.9,550h3.6v2h-3.6zM1779.3,550h3.6v2h-3.6zM1789.4,547.3h3.6v2h-3.6zM1798.5,559.1h3.6v2h-3.6zM1801.2,547.3h3.6v2h-3.6zM1810.3,533.6h3.6v2h-3.6zM1815.7,533.6h3.6v2h-3.6zM1821.2,539.1h3.6v2h-3.6zM1823,550h3.6v2h-3.6zM1827.6,556.4h3.6v2h-3.6zM1837.6,539.1h3.6v2h-3.6zM1853.1,547.3h3.6v2h-3.6zM1856.7,536.3h3.6v2h-3.6zM1860.3,547.3h3.6v2h-3.6zM1874.9,550h3.6v2h-3.6zM1879.4,539.1h3.6v2h-3.6zM1884,533.6h3.6v2h-3.6zM1890.4,533.6h3.6v2h-3.6zM1900.4,516.3h3.6v2h-3.6zM1902.2,523.6h3.6v2h-3.6zM1915.9,516.3h3.6v2h-3.6zM1922.2,509.9h3.6v2h-3.6zM1926.8,527.2h3.6v2h-3.6z" fill="#f0ec88"/>
<path d="M1573.5,563.5h2.2v4.1h-2.2zM1578,571.7h2.2v5.9h-2.2zM1581.6,575.2h2.2v6.1h-2.2zM1585.3,592.1h2.2v5.2h-2.2zM1616.2,576.1h2.2v4.4h-2.2zM1632.6,586.2h2.2v5.9h-2.2zM1666.3,552.5h2.2v4.3h-2.2zM1670.8,555.9h2.2v4.7h-2.2zM1689.9,531.7h2.2v5.8h-2.2zM1710.9,566.5h2.2v5.4h-2.2zM1718.2,577.1h2.2v6h-2.2zM1797.3,550.7h2.2v6.1h-2.2zM1869.2,541.8h2.2v5.6h-2.2zM1922,525.1h2.2v4.5h-2.2z" fill="#0a7ef2"/>
<path d="M1570.7,549.9h2.2v4.1h-2.2zM1590.7,582.7h2.2v5.7h-2.2zM1603.5,578.5h2.2v6.9h-2.2zM1626.2,563.1h2.2v4.8h-2.2zM1656.3,555.7h2.2v5.1h-2.2zM1659.9,562.2h2.2v5h-2.2zM1664.5,562.4h2.2v6.2h-2.2zM1674.5,546.4h2.2v5.5h-2.2zM1677.2,527.8h2.2v6.4h-2.2zM1688.1,538.1h2.2v4h-2.2zM1726.3,568.8h2.2v4.4h-2.2zM1762.7,556h2.2v4.6h-2.2zM1863.8,532.1h2.2v5.1h-2.2zM1894.7,524.7h2.2v5.2h-2.2z" fill="#ff0000"/>
<text x="67.6" y="813" textLength="17.7" lengthAdjust="spacingAndGlyphs" font-family="Liberation Mono" font-size="21" fill="#dadada" stroke="#dadada" stroke-width="0.2">O2</text>
<text x="94" y="813" textLength="17.7" lengthAdjust="spacingAndGlyphs" font-family="Liberation Mono" font-size="21" fill="#dadada" stroke="#dadada" stroke-width="0.2">O4</text>
<text x="106" y="813" textLength="17.7" lengthAdjust="spacingAndGlyphs" font-family="Liberation Mono" font-size="21" fill="#dadada" stroke="#dadada" stroke-width="0.2">O5</text>
<text x="119" y="813" textLength="17.7" lengthAdjust="spacingAndGlyphs" font-family="Liberation Mono" font-size="21" fill="#dadada" stroke="#dadada" stroke-width="0.2">O6</text>
<text x="168.6" y="813" textLength="17.7" lengthAdjust="spacingAndGlyphs" font-family="Liberation Mono" font-size="21" fill="#dadada" stroke="#dadada" stroke-width="0.2">O9</text>
<text x="266.4" y="813" textLength="17.7" lengthAdjust="spacingAndGlyphs" font-family="Liberation Mono" font-size="21" fill="#dadada" stroke="#dadada" stroke-width="0.2">1O</text>
<text x="361.6" y="813" textLength="17.7" lengthAdjust="spacingAndGlyphs" font-family="Liberation Mono" font-size="21" fill="#dadada" stroke="#dadada" stroke-width="0.2">11</text>
<text x="452.2" y="813" textLength="17.7" lengthAdjust="spacingAndGlyphs" font-family="Liberation Mono" font-size="21" fill="#dadada" stroke="#dadada" stroke-width="0.2">12</text>
<text x="549" y="813" textLength="17.7" lengthAdjust="spacingAndGlyphs" font-family="Liberation Mono" font-size="21" fill="#dadada" stroke="#dadada" stroke-width="0.2">13</text>
<text x="644.3" y="813" textLength="17.7" lengthAdjust="spacingAndGlyphs" font-family="Liberation Mono" font-size="21" fill="#dadada" stroke="#dadada" stroke-width="0.2">14</text>
<text x="714.2" y="813" textLength="17.7" lengthAdjust="spacingAndGlyphs" font-family="Liberation Mono" font-size="21" fill="#dadada" stroke="#dadada" stroke-width="0.2">15</text>
<text x="758.3" y="813" textLength="17.7" lengthAdjust="spacingAndGlyphs" font-family="Liberation Mono" font-size="21" fill="#dadada" stroke="#dadada" stroke-width="0.2">16</text>
<text x="805.2" y="813" textLength="17.7" lengthAdjust="spacingAndGlyphs" font-family="Liberation Mono" font-size="21" fill="#dadada" stroke="#dadada" stroke-width="0.2">17</text>
<text x="900.5" y="813" textLength="17.7" lengthAdjust="spacingAndGlyphs" font-family="Liberation Mono" font-size="21" fill="#dadada" stroke="#dadada" stroke-width="0.2">18</text>
<text x="994.4" y="813" textLength="17.7" lengthAdjust="spacingAndGlyphs" font-family="Liberation Mono" font-size="21" fill="#dadada" stroke="#dadada" stroke-width="0.2">19</text>
<text x="1091.1" y="813" textLength="17.7" lengthAdjust="spacingAndGlyphs" font-family="Liberation Mono" font-size="21" fill="#dadada" stroke="#dadada" stroke-width="0.2">2O</text>
<text x="1186.4" y="813" textLength="17.7" lengthAdjust="spacingAndGlyphs" font-family="Liberation Mono" font-size="21" fill="#dadada" stroke="#dadada" stroke-width="0.2">21</text>
<text x="1283.2" y="813" textLength="17.7" lengthAdjust="spacingAndGlyphs" font-family="Liberation Mono" font-size="21" fill="#dadada" stroke="#dadada" stroke-width="0.2">22</text>
<text x="1378.3" y="813" textLength="17.7" lengthAdjust="spacingAndGlyphs" font-family="Liberation Mono" font-size="21" fill="#dadada" stroke="#dadada" stroke-width="0.2">23</text>
<text x="1473.7" y="813" textLength="17.7" lengthAdjust="spacingAndGlyphs" font-family="Liberation Mono" font-size="21" fill="#dadada" stroke="#dadada" stroke-width="0.2">OO</text>
<text x="1570.3" y="813" textLength="17.7" lengthAdjust="spacingAndGlyphs" font-family="Liberation Mono" font-size="21" fill="#dadada" stroke="#dadada" stroke-width="0.2">O1</text>
<text x="1661.2" y="813" textLength="17.7" lengthAdjust="spacingAndGlyphs" font-family="Liberation Mono" font-size="21" fill="#dadada" stroke="#dadada" stroke-width="0.2">O2</text>
<text x="1737.5" y="813" textLength="17.7" lengthAdjust="spacingAndGlyphs" font-family="Liberation Mono" font-size="21" fill="#dadada" stroke="#dadada" stroke-width="0.2">O3</text>
<text x="1801.9" y="813" textLength="17.7" lengthAdjust="spacingAndGlyphs" font-family="Liberation Mono" font-size="21" fill="#dadada" stroke="#dadada" stroke-width="0.2">O4</text>
<text x="1878.2" y="813" textLength="17.7" lengthAdjust="spacingAndGlyphs" font-family="Liberation Mono" font-size="21" fill="#dadada" stroke="#dadada" stroke-width="0.2">O5</text>
<text x="1904.5" y="813" textLength="17.7" lengthAdjust="spacingAndGlyphs" font-family="Liberation Mono" font-size="21" fill="#dadada" stroke="#dadada" stroke-width="0.2">O6</text>
<text x="1473.7" y="789.5" textLength="17.7" lengthAdjust="spacingAndGlyphs" font-family="Liberation Mono" font-size="21" fill="#d6d6d6">22</text>
<text x="1933.6" y="446.4" textLength="46.7" lengthAdjust="spacingAndGlyphs" font-family="Liberation Mono" font-size="21" fill="#d6d6d6">4,O75</text>
<text x="1933.6" y="613.9" textLength="46.7" lengthAdjust="spacingAndGlyphs" font-family="Liberation Mono" font-size="21" fill="#d6d6d6">4,O25</text>
<text x="1933.6" y="698.2" textLength="46.7" lengthAdjust="spacingAndGlyphs" font-family="Liberation Mono" font-size="21" fill="#d6d6d6">4,OOO</text>
<text x="1933.6" y="780.5" textLength="46.7" lengthAdjust="spacingAndGlyphs" font-family="Liberation Mono" font-size="21" fill="#d6d6d6">3,975</text>
<rect x="1931.5" y="511.5" width="92.8" height="32.9" fill="#d4d4d4"/>
<text x="1951.8" y="532.4" textLength="49.5" lengthAdjust="spacingAndGlyphs" font-family="Liberation Mono" font-size="21" font-weight="bold" fill="#000">4,O52</text>
<path transform="translate(13.7,408.5) scale(1.055,1.031)" d="M1,2.5 H6 V13 H1 Z M1,7.8 H6 M8,3.5 H15.5 M11.8,1 V6 M8,6 H15.5 M7.5,9 H16 M13.5,7 V14.5 Q13.5,16 11.5,15.5 M9.3,11 L10.5,13" fill="none" stroke="#dedede" stroke-width="1.45" stroke-linecap="square"/>
<path transform="translate(33,408.5) scale(1.055,1.031)" d="M5,0.5 V2 M1,2.5 H10 M5,3 L2,7 M2,7 H8 L2.5,12.5 M5.5,10 L9,13.5 M8,4.5 L3,10 M12,2.5 V12 M15,0.8 V14.5 Q15,16 13,15.5" fill="none" stroke="#dedede" stroke-width="1.45" stroke-linecap="square"/>
<text x="51.1" y="424.5" textLength="57.8" lengthAdjust="spacingAndGlyphs" font-family="Liberation Mono" font-size="21.5" font-weight="normal" fill="#dedede">:O6:OO</text>
<path transform="translate(119.7,408.5) scale(1.055,1.031)" d="M3.5,0.8 L1,8 H7.5 M5.5,5 Q5.5,12 1,15.5 M1.5,10 L7.5,14 M11.5,0.8 L9,6 H15.5 L13.5,4 M10,9 H15.5 V15 H10 Z" fill="none" stroke="#dedede" stroke-width="1.45" stroke-linecap="square"/>
<path transform="translate(139,408.5) scale(1.055,1.031)" d="M4.5,0.8 L1,7 M3,5 V16 M7,3 H16 M11.5,0.8 V4.5 M8.5,5 H14.5 V13 H8.5 Z M8.5,7.7 H14.5 M8.5,10.3 H14.5 M6.5,5 V15.5 H16" fill="none" stroke="#dedede" stroke-width="1.45" stroke-linecap="square"/>
<text x="157.1" y="424.5" textLength="57.8" lengthAdjust="spacingAndGlyphs" font-family="Liberation Mono" font-size="21.5" font-weight="normal" fill="#dedede">:4,O52</text>
<path transform="translate(225.8,408.5) scale(1.055,1.031)" d="M8,0.3 V2 M1,2.3 H15 M5,4.3 H11 V7 H5 Z M2,9 V16 M2,9 H14 V15 Q14,16 12.5,16 M6,11 H10 V14 H6 Z" fill="none" stroke="#dedede" stroke-width="1.45" stroke-linecap="square"/>
<path transform="translate(245.1,408.5) scale(1.055,1.031)" d="M4.5,0.8 L1,7 M3,5 V16 M7,3 H16 M11.5,0.8 V4.5 M8.5,5 H14.5 V13 H8.5 Z M8.5,7.7 H14.5 M8.5,10.3 H14.5 M6.5,5 V15.5 H16" fill="none" stroke="#dedede" stroke-width="1.45" stroke-linecap="square"/>
<text x="263.1" y="424.5" textLength="57.8" lengthAdjust="spacingAndGlyphs" font-family="Liberation Mono" font-size="21.5" font-weight="normal" fill="#dedede">:4,O52</text>
<path transform="translate(331.8,408.5) scale(1.055,1.031)" d="M8,0.3 V2.3 M1.5,5 V2.8 H14.5 V5 M7,5 L4.5,10 H14.5 M11.5,10 Q10.5,14 2,16 M5,12.3 L14,16 M1,9.5 H15" fill="none" stroke="#dedede" stroke-width="1.45" stroke-linecap="square"/>
<path transform="translate(351.1,408.5) scale(1.055,1.031)" d="M4.5,0.8 L1,7 M3,5 V16 M7,3 H16 M11.5,0.8 V4.5 M8.5,5 H14.5 V13 H8.5 Z M8.5,7.7 H14.5 M8.5,10.3 H14.5 M6.5,5 V15.5 H16" fill="none" stroke="#dedede" stroke-width="1.45" stroke-linecap="square"/>
<text x="369.2" y="424.5" textLength="57.8" lengthAdjust="spacingAndGlyphs" font-family="Liberation Mono" font-size="21.5" font-weight="normal" fill="#dedede">:4,O52</text>
<path transform="translate(437.9,408.5) scale(1.055,1.031)" d="M4,0.8 L1,5.5 L6.5,5.5 M6,3.5 L1,10.5 H7 M4,10.5 V16 M1.3,13 L0.5,15.5 M6.5,13 L7.5,15.5 M11,0.8 L8.5,5.5 M10,3 H15 L9,10 M10.5,5.5 L16,9.5 M11,11 L13.5,12.3 M10,13.5 L14.5,15.5" fill="none" stroke="#dedede" stroke-width="1.45" stroke-linecap="square"/>
<path transform="translate(457.1,408.5) scale(1.055,1.031)" d="M4.5,0.8 L1,7 M3,5 V16 M7,3 H16 M11.5,0.8 V4.5 M8.5,5 H14.5 V13 H8.5 Z M8.5,7.7 H14.5 M8.5,10.3 H14.5 M6.5,5 V15.5 H16" fill="none" stroke="#dedede" stroke-width="1.45" stroke-linecap="square"/>
<text x="475.2" y="424.5" textLength="57.8" lengthAdjust="spacingAndGlyphs" font-family="Liberation Mono" font-size="21.5" font-weight="normal" fill="#dedede">:4,O52</text>
<rect x="9" y="822.4" width="2016" height="1.4" fill="#a4a4a4"/><rect x="9" y="823.8" width="2016" height="4.6" fill="#f8f8f8"/><rect x="9" y="828.4" width="2016" height="1.6" fill="#a4a4a4"/>
<rect x="9.2" y="830" width="2015.1" height="243" fill="#1b1b1b"/>
<rect x="9.2" y="1072" width="2015.1" height="1" fill="#0c0c0c"/>
<rect x="11" y="832" width="1919.8" height="216.9" fill="#000000"/>
<path d="M10.1,1049.9 V831.1 H1931.7 V1049.8 H10.1" fill="none" stroke="#e6e6e6" stroke-width="1.8"/>
<path d="M66.2,832 V1048.9 M93,832 V1048.9 M119.3,832 V1048.9 M132,832 V1048.9 M145.2,832 V1048.9 M167.8,832 V1048.9 M264.7,832 V1048.9 M359.9,832 V1048.9 M450.5,832 V1048.9 M547.3,832 V1048.9 M642.6,832 V1048.9 M738,832 V1048.9 M755,832 V1048.9 M803.5,832 V1048.9 M898.8,832 V1048.9 M992.7,832 V1048.9 M1089.4,832 V1048.9 M1184.7,832 V1048.9 M1281.5,832 V1048.9 M1376.8,832 V1048.9 M1472,832 V1048.9 M1568.9,832 V1048.9 M1659.5,832 V1048.9 M1735.8,832 V1048.9 M1800.2,832 V1048.9 M1876.7,832 V1048.9 M1928.1,832 V1048.9 M11,886.8 H1930.8 M11,957 H1930.8 M11,1027.3 H1930.8" fill="none" stroke="#a6a6a6" stroke-width="1.8" stroke-dasharray="1.7 1.46"/>
<path d="M146.6,832 V1048.9" fill="none" stroke="#a6a6a6" stroke-width="1.5" stroke-dasharray="1.7 1.46"/>
<path d="M13,920H14.6V915.2H16.2V920H17.8V915.2H19.4V921.6H21V924.8H22.6V921.6H24.2V916.8H25.8V913.6H27.4V913.6H29V918.4H30.6V924.8H32.2V924.8H33.8V921.6H35.4V918.4H37V915.2H38.6V910.4H40.2V908.8H41.8V908.8H43.4V910.4H45V910.4H46.6V908.8H48.2V915.2H49.8V918.4H51.4V923.2H53V920H54.6V924.8H56.2V926.4H57.8V928H59.4V929.6H61V929.6H62.6V928H64.2V932.8H65.8V934.4H67.4V932.8H69V932.8H70.6V931.2H72.2V924.8H73.8V924.8H75.4V920H77V923.2H78.6V921.6H80.2V923.2H81.8V924.8H83.4V926.4H85V928H86.6V926.4H88.2V926.4H89.8V920H91.4V920H93V916.8H94.6V912H96.2V912H97.8V910.4H99.4V910.4H101V912H102.6V908.8H104.2V907.2H105.8V907.2H107.4V912H109V904H110.6V899.2H112.2V894.4H113.8V902.4H115.4V910.4H117V913.6H118.6V913.6H120.2V908.8H121.8V908.8H123.4V907.2H125V908.8H126.6V912H128.2V913.6H129.8V912H131.4V912H133V915.2H134.6V912H136.2V920H137.8V916.8H139.4V920H141V921.6H142.6V921.6H144.2V920H145.8V910.4H147.4V910.4H149V916.8H150.6V921.6H152.2V926.4H153.8V923.2H155.4V921.6H157V921.6H158.6V920H160.2V921.6H161.8V921.6H163.4V920H165V916.8H166.6V920H168.2V918.4H169.8V915.2H171.4V921.6H173V926.4H174.6V920H176.2V921.6H177.8V920H179.4V921.6H181V916.8H182.6V918.4H184.2V920H185.8V921.6H187.4V918.4H189V924.8H190.6V920H192.2V920H193.8V920H195.4V916.8H197V915.2H198.6V915.2H200.2V913.6H201.8V915.2H203.4V913.6H205V918.4H206.6V920H208.2V920H209.8V923.2H211.4V924.8H213V926.4H214.6V928H216.2V931.2H217.8V928H219.4V926.4H221V926.4H222.6V931.2H224.2V931.2H225.8V929.6H227.4V932.8H229V931.2H230.6V929.6H232.2V929.6H233.8V929.6H235.4V926.4H237V923.2H238.6V923.2H240.2V921.6H241.8V926.4H243.4V924.8H245V923.2H246.6V923.2H248.2V923.2H249.8V921.6H251.4V921.6H253V915.2H254.6V912H256.2V908.8H257.8V913.6H259.4V912H261V910.4H262.6V910.4H264.2V915.2H265.8V920H267.4V924.8H269V928H270.6V926.4H272.2V924.8H273.8V921.6H275.4V924.8H277V920H278.6V918.4H280.2V920H281.8V916.8H283.4V916.8H285V918.4H286.6V916.8H288.2V913.6H289.8V912H291.4V916.8H293V921.6H294.6V923.2H296.2V924.8H297.8V929.6H299.4V929.6H301V932.8H302.6V931.2H304.2V932.8H305.8V931.2H307.4V932.8H309V931.2H310.6V932.8H312.2V932.8H313.8V936H315.4V937.6H317V940.8H318.6V934.4H320.2V931.2H321.8V928H323.4V929.6H325V926.4H326.6V928H328.2V928H329.8V931.2H331.4V932.8H333V926.4H334.6V926.4H336.2V924.8H337.8V923.2H339.4V921.6H341V921.6H342.6V918.4H344.2V918.4H345.8V923.2H347.4V923.2H349V924.8H350.6V924.8H352.2V929.6H353.8V928H355.4V926.4H357V928H358.6V929.6H360.2V929.6H361.8V929.6H363.4V931.2H365V934.4H366.6V939.2H368.2V936H369.8V934.4H371.4V931.2H373V928H374.6V928H376.2V924.8H377.8V926.4H379.4V928H381V926.4H382.6V926.4H384.2V926.4H385.8V924.8H387.4V923.2H389V920H390.6V923.2H392.2V924.8H393.8V924.8H395.4V928H397V928H398.6V923.2H400.2V920H401.8V916.8H403.4V915.2H405V912H406.6V915.2H408.2V916.8H409.8V920H411.4V928H413V928H414.6V923.2H416.2V920H417.8V916.8H419.4V912H421V916.8H422.6V918.4H424.2V923.2H425.8V924.8H427.4V920H429V921.6H430.6V921.6H432.2V923.2H433.8V924.8H435.4V921.6H437V923.2H438.6V929.6H440.2V928H441.8V924.8H443.4V921.6H445V923.2H446.6V928H448.2V931.2H449.8V932.8H451.4V936H453V937.6H454.6V936H456.2V936H457.8V932.8H459.4V928H461V928H462.6V931.2H464.2V934.4H465.8V936H467.4V931.2H469V931.2H470.6V934.4H472.2V940.8H473.8V942.4H475.4V944H477V948.8H478.6V942.4H480.2V942.4H481.8V940.8H483.4V942.4H485V940.8H486.6V937.6H488.2V936H489.8V937.6H491.4V936H493V939.2H494.6V940.8H496.2V942.4H497.8V939.2H499.4V942.4H501V944H502.6V945.6H504.2V947.2H505.8V947.2H507.4V944H509V940.8H510.6V940.8H512.2V942.4H513.8V944H515.4V939.2H517V942.4H518.6V942.4H520.2V940.8H521.8V939.2H523.4V940.8H525V942.4H526.6V944H528.2V944H529.8V940.8H531.4V942.4H533V942.4H534.6V940.8H536.2V939.2H537.8V940.8H539.4V937.6H541V936H542.6V934.4H544.2V934.4H545.8V934.4H547.4V936H549V940.8H550.6V939.2H552.2V937.6H553.8V936H555.4V939.2H557V939.2H558.6V940.8H560.2V937.6H561.8V936H563.4V936H565V936H566.6V940.8H568.2V936H569.8V936H571.4V939.2H573V939.2H574.6V937.6H576.2V937.6H577.8V940.8H579.4V940.8H581V937.6H582.6V934.4H584.2V931.2H585.8V931.2H587.4V934.4H589V936H590.6V934.4H592.2V931.2H593.8V931.2H595.4V932.8H597V932.8H598.6V937.6H600.2V934.4H601.8V939.2H603.4V942.4H605V937.6H606.6V936H608.2V936H609.8V936H611.4V934.4H613V932.8H614.6V931.2H616.2V932.8H617.8V929.6H619.4V926.4H621V928H622.6V928H624.2V929.6H625.8V934.4H627.4V932.8H629V939.2H630.6V939.2H632.2V934.4H633.8V932.8H635.4V929.6H637V932.8H638.6V928H640.2V929.6H641.8V931.2H643.4V931.2H645V936H646.6V934.4H648.2V932.8H649.8V931.2H651.4V934.4H653V934.4H654.6V934.4H656.2V931.2H657.8V924.8H659.4V929.6H661V932.8H662.6V936H664.2V939.2H665.8V939.2H667.4V937.6H669V936H670.6V937.6H672.2V932.8H673.8V936H675.4V934.4H677V937.6H678.6V934.4H680.2V931.2H681.8V931.2H683.4V932.8H685V929.6H686.6V931.2H688.2V931.2H689.8V931.2H691.4V934.4H693V936H694.6V932.8H696.2V931.2H697.8V937.6H699.4V936H701V934.4H702.6V931.2H704.2V931.2H705.8V931.2H707.4V929.6H709V926.4H710.6V928H712.2V924.8H713.8V931.2H715.4V936H717V936H718.6V936H720.2V932.8H721.8V928H723.4V929.6H725V932.8H726.6V937.6H728.2V936H729.8V940.8H731.4V942.4H733V940.8H734.6V940.8H736.2V937.6H737.8V942.4H739.4V947.2H741V948.8H742.6V950.4H744.2V952H745.8V955.2H747.4V955.2H749V952H750.6V948.8H752.2V948.8H753.8V945.6H755.4V977.6H757V1030.4H758.6V1027.2H760.2V1024H761.8V1020.8H763.4V1019.2H765V1022.4H766.6V1027.2H768.2V1028.8H769.8V1028.8H771.4V1036.8H773V1035.2H774.6V1033.6H776.2V1030.4H777.8V1030.4H779.4V1027.2H781V1027.2H782.6V1024H784.2V1024H785.8V1022.4H787.4V1024H789V1017.6H790.6V1016H792.2V1012.8H793.8V1008H795.4V1006.4H797V1004.8H798.6V1001.6H800.2V1001.6H801.8V1000H803.4V1000H805V1003.2H806.6V1009.6H808.2V1006.4H809.8V1003.2H811.4V1001.6H813V1003.2H814.6V1004.8H816.2V1004.8H817.8V1009.6H819.4V1012.8H821V1012.8H822.6V1011.2H824.2V1011.2H825.8V1009.6H827.4V1009.6H829V1008H830.6V1003.2H832.2V1006.4H833.8V1006.4H835.4V1011.2H837V1014.4H838.6V1017.6H840.2V1019.2H841.8V1017.6H843.4V1017.6H845V1019.2H846.6V1017.6H848.2V1017.6H849.8V1017.6H851.4V1017.6H853V1009.6H854.6V1014.4H856.2V1020.8H857.8V1022.4H859.4V1028.8H861V1028.8H862.6V1027.2H864.2V1025.6H865.8V1027.2H867.4V1024H869V1020.8H870.6V1020.8H872.2V1022.4H873.8V1025.6H875.4V1028.8H877V1032H878.6V1032H880.2V1032H881.8V1030.4H883.4V1027.2H885V1027.2H886.6V1024H888.2V1022.4H889.8V1024H891.4V1027.2H893V1028.8H894.6V1030.4H896.2V1032H897.8V1035.2H899.4V1033.6H901V1027.2H902.6V1024H904.2V1019.2H905.8V1019.2H907.4V1020.8H909V1022.4H910.6V1022.4H912.2V1020.8H913.8V1022.4H915.4V1025.6H917V1028.8H918.6V1028.8H920.2V1024H921.8V1020.8H923.4V1012.8H925V1016H926.6V1016H928.2V1019.2H929.8V1014.4H931.4V1014.4H933V1016H934.6V1012.8H936.2V1008H937.8V1009.6H939.4V1009.6H941V1012.8H942.6V1017.6H944.2V1016H945.8V1014.4H947.4V1016H949V1012.8H950.6V1012.8H952.2V1014.4H953.8V1012.8H955.4V1012.8H957V1012.8H958.6V1016H960.2V1019.2H961.8V1024H963.4V1024H965V1017.6H966.6V1016H968.2V1016H969.8V1014.4H971.4V1017.6H973V1014.4H974.6V1006.4H976.2V1006.4H977.8V1006.4H979.4V1003.2H981V1000H982.6V1000H984.2V998.4H985.8V998.4H987.4V995.2H989V993.6H990.6V993.6H992.2V990.4H993.8V990.4H995.4V987.2H997V987.2H998.6V985.6H1000.2V987.2H1001.8V993.6H1003.4V990.4H1005V995.2H1006.6V996.8H1008.2V993.6H1009.8V993.6H1011.4V993.6H1013V996.8H1014.6V992H1016.2V992H1017.8V1003.2H1019.4V1008H1021V1006.4H1022.6V1009.6H1024.2V1008H1025.8V1008H1027.4V1009.6H1029V1008H1030.6V1004.8H1032.2V1001.6H1033.8V1001.6H1035.4V1001.6H1037V1001.6H1038.6V1001.6H1040.2V1001.6H1041.8V1001.6H1043.4V998.4H1045V996.8H1046.6V993.6H1048.2V995.2H1049.8V998.4H1051.4V998.4H1053V1000H1054.6V998.4H1056.2V998.4H1057.8V1001.6H1059.4V1000H1061V996.8H1062.6V996.8H1064.2V995.2H1065.8V998.4H1067.4V1000H1069V1000H1070.6V1001.6H1072.2V996.8H1073.8V993.6H1075.4V992H1077V990.4H1078.6V988.8H1080.2V985.6H1081.8V985.6H1083.4V984H1085V964.8H1086.6V963.2H1088.2V960H1089.8V956.8H1091.4V958.4H1093V958.4H1094.6V960H1096.2V955.2H1097.8V955.2H1099.4V956.8H1101V958.4H1102.6V961.6H1104.2V958.4H1105.8V956.8H1107.4V955.2H1109V952H1110.6V952H1112.2V948.8H1113.8V950.4H1115.4V947.2H1117V945.6H1118.6V944H1120.2V940.8H1121.8V934.4H1123.4V934.4H1125V937.6H1126.6V939.2H1128.2V939.2H1129.8V944H1131.4V950.4H1133V950.4H1134.6V953.6H1136.2V953.6H1137.8V952H1139.4V952H1141V950.4H1142.6V953.6H1144.2V948.8H1145.8V947.2H1147.4V942.4H1149V939.2H1150.6V937.6H1152.2V942.4H1153.8V948.8H1155.4V955.2H1157V958.4H1158.6V963.2H1160.2V956.8H1161.8V952H1163.4V952H1165V950.4H1166.6V950.4H1168.2V950.4H1169.8V940.8H1171.4V931.2H1173V923.2H1174.6V916.8H1176.2V908.8H1177.8V910.4H1179.4V908.8H1181V910.4H1182.6V913.6H1184.2V915.2H1185.8V916.8H1187.4V915.2H1189V900.8H1190.6V897.6H1192.2V896H1193.8V894.4H1195.4V894.4H1197V892.8H1198.6V889.6H1200.2V894.4H1201.8V897.6H1203.4V899.2H1205V902.4H1206.6V904H1208.2V905.6H1209.8V905.6H1211.4V910.4H1213V907.2H1214.6V904H1216.2V902.4H1217.8V899.2H1219.4V896H1221V892.8H1222.6V892.8H1224.2V891.2H1225.8V894.4H1227.4V897.6H1229V899.2H1230.6V905.6H1232.2V907.2H1233.8V907.2H1235.4V907.2H1237V905.6H1238.6V899.2H1240.2V894.4H1241.8V891.2H1243.4V886.4H1245V884.8H1246.6V881.6H1248.2V880H1249.8V875.2H1251.4V875.2H1253V868.8H1254.6V865.6H1256.2V870.4H1257.8V873.6H1259.4V870.4H1261V868.8H1262.6V867.2H1264.2V867.2H1265.8V865.6H1267.4V872H1269V875.2H1270.6V880H1272.2V880H1273.8V878.4H1275.4V875.2H1277V870.4H1278.6V864H1280.2V860.8H1281.8V856H1283.4V857.6H1285V852.8H1286.6V854.4H1288.2V856H1289.8V854.4H1291.4V852.8H1293V856H1294.6V859.2H1296.2V857.6H1297.8V851.2H1299.4V851.2H1301V851.2H1302.6V857.6H1304.2V856H1305.8V854.4H1307.4V854.4H1309V852.8H1310.6V854.4H1312.2V849.6H1313.8V848H1315.4V844.8H1317V844.8H1318.6V852.8H1320.2V857.6H1321.8V868.8H1323.4V864H1325V860.8H1326.6V860.8H1328.2V860.8H1329.8V865.6H1331.4V872H1333V886.4H1334.6V894.4H1336.2V910.4H1337.8V921.6H1339.4V929.6H1341V934.4H1342.6V934.4H1344.2V932.8H1345.8V939.2H1347.4V940.8H1349V948.8H1350.6V947.2H1352.2V936H1353.8V928H1355.4V921.6H1357V918.4H1358.6V915.2H1360.2V915.2H1361.8V913.6H1363.4V915.2H1365V924.8H1366.6V929.6H1368.2V929.6H1369.8V924.8H1371.4V921.6H1373V921.6H1374.6V920H1376.2V918.4H1377.8V908.8H1379.4V907.2H1381V900.8H1382.6V896H1384.2V897.6H1385.8V899.2H1387.4V902.4H1389V902.4H1390.6V900.8H1392.2V892.8H1393.8V892.8H1395.4V888H1397V889.6H1398.6V889.6H1400.2V886.4H1401.8V891.2H1403.4V889.6H1405V891.2H1406.6V894.4H1408.2V896H1409.8V897.6H1411.4V900.8H1413V905.6H1414.6V910.4H1416.2V920H1417.8V916.8H1419.4V916.8H1421V916.8H1422.6V913.6H1424.2V918.4H1425.8V923.2H1427.4V924.8H1429V924.8H1430.6V921.6H1432.2V918.4H1433.8V913.6H1435.4V912H1437V915.2H1438.6V918.4H1440.2V918.4H1441.8V924.8H1443.4V939.2H1445V952H1446.6V961.6H1448.2V971.2H1449.8V977.6H1451.4V982.4H1453V987.2H1454.6V988.8H1456.2V979.2H1457.8V969.6H1459.4V966.4H1461V961.6H1462.6V963.2H1464.2V963.2H1465.8V963.2H1467.4V966.4H1469V964.8H1470.6V964.8H1472.2V961.6H1473.8V958.4H1475.4V958.4H1477V961.6H1478.6V966.4H1480.2V966.4H1481.8V961.6H1483.4V960H1485V958.4H1486.6V956.8H1488.2V960H1489.8V964.8H1491.4V968H1493V969.6H1494.6V968H1496.2V969.6H1497.8V968H1499.4V964.8H1501V963.2H1502.6V960H1504.2V956.8H1505.8V952H1507.4V955.2H1509V956.8H1510.6V961.6H1512.2V968H1513.8V968H1515.4V963.2H1517V961.6H1518.6V963.2H1520.2V960H1521.8V963.2H1523.4V964.8H1525V963.2H1526.6V950.4H1528.2V956.8H1529.8V955.2H1531.4V955.2H1533V958.4H1534.6V963.2H1536.2V969.6H1537.8V972.8H1539.4V972.8H1541V968H1542.6V969.6H1544.2V969.6H1545.8V964.8H1547.4V960H1549V955.2H1550.6V950.4H1552.2V945.6H1553.8V942.4H1555.4V934.4H1557V934.4H1558.6V931.2H1560.2V928H1561.8V923.2H1563.4V920H1565V921.6H1566.6V921.6H1568.2V924.8H1569.8V928H1571.4V921.6H1573V916.8H1574.6V905.6H1576.2V904H1577.8V904H1579.4V905.6H1581V905.6H1582.6V905.6H1584.2V904H1585.8V897.6H1587.4V889.6H1589V888H1590.6V894.4H1592.2V896H1593.8V897.6H1595.4V892.8H1597V889.6H1598.6V889.6H1600.2V886.4H1601.8V883.2H1603.4V883.2H1605V880H1606.6V884.8H1608.2V886.4H1609.8V889.6H1611.4V888H1613V886.4H1614.6V888H1616.2V886.4H1617.8V886.4H1619.4V880H1621V880H1622.6V880H1624.2V883.2H1625.8V888H1627.4V889.6H1629V891.2H1630.6V891.2H1632.2V888H1633.8V886.4H1635.4V883.2H1637V878.4H1638.6V873.6H1640.2V873.6H1641.8V876.8H1643.4V876.8H1645V878.4H1646.6V875.2H1648.2V880H1649.8V875.2H1651.4V870.4H1653V867.2H1654.6V860.8H1656.2V867.2H1657.8V881.6H1659.4V892.8H1661V884.8H1662.6V880H1664.2V876.8H1665.8V880H1667.4V883.2H1669V883.2H1670.6V880H1672.2V878.4H1673.8V880H1675.4V883.2H1677V884.8H1678.6V892.8H1680.2V892.8H1681.8V892.8H1683.4V892.8H1685V891.2H1686.6V889.6H1688.2V888H1689.8V889.6H1691.4V889.6H1693V891.2H1694.6V889.6H1696.2V886.4H1697.8V884.8H1699.4V891.2H1701V892.8H1702.6V886.4H1704.2V880H1705.8V875.2H1707.4V875.2H1709V873.6H1710.6V873.6H1712.2V876.8H1713.8V878.4H1715.4V881.6H1717V878.4H1718.6V876.8H1720.2V880H1721.8V881.6H1723.4V880H1725V886.4H1726.6V889.6H1728.2V892.8H1729.8V897.6H1731.4V897.6H1733V896H1734.6V892.8H1736.2V896H1737.8V900.8H1739.4V907.2H1741V907.2H1742.6V907.2H1744.2V907.2H1745.8V907.2H1747.4V912H1749V916.8H1750.6V912H1752.2V908.8H1753.8V912H1755.4V908.8H1757V907.2H1758.6V904H1760.2V907.2H1761.8V910.4H1763.4V910.4H1765V905.6H1766.6V905.6H1768.2V908.8H1769.8V913.6H1771.4V915.2H1773V913.6H1774.6V905.6H1776.2V904H1777.8V904H1779.4V907.2H1781V910.4H1782.6V915.2H1784.2V915.2H1785.8V916.8H1787.4V916.8H1789V915.2H1790.6V912H1792.2V910.4H1793.8V908.8H1795.4V905.6H1797V907.2H1798.6V908.8H1800.2V915.2H1801.8V916.8H1803.4V916.8H1805V916.8H1806.6V920H1808.2V915.2H1809.8V916.8H1811.4V920H1813V918.4H1814.6V918.4H1816.2V921.6H1817.8V924.8H1819.4V928H1821V929.6H1822.6V934.4H1824.2V932.8H1825.8V926.4H1827.4V923.2H1829V920H1830.6V921.6H1832.2V921.6H1833.8V926.4H1835.4V928H1837V926.4H1838.6V928H1840.2V929.6H1841.8V931.2H1843.4V937.6H1845V944H1846.6V948.8H1848.2V956.8H1849.8V958.4H1851.4V952H1853V947.2H1854.6V944H1856.2V942.4H1857.8V937.6H1859.4V934.4H1861V932.8H1862.6V928H1864.2V924.8H1865.8V923.2H1867.4V929.6H1869V931.2H1870.6V931.2H1872.2V926.4H1873.8V921.6H1875.4V916.8H1877V916.8H1878.6V913.6H1880.2V910.4H1881.8V910.4H1883.4V913.6H1885V918.4H1886.6V920H1888.2V920H1889.8V916.8H1891.4V912H1893V908.8H1894.6V907.2H1896.2V904H1897.8V902.4H1899.4V904H1901V904H1902.6V900.8H1904.2V897.6H1905.8V902.4H1907.4V902.4H1909V902.4H1910.6V900.8H1912.2V905.6H1913.8V902.4H1915.4V905.6H1917V908.8H1918.6V912H1920.2V912H1921.8V902.4H1923.4V899.2H1925V915.2H1926.6V912H1928.2V912" fill="none" stroke="#ff0000" stroke-width="3.4" stroke-linejoin="miter" stroke-linecap="square"/>
<text x="67.6" y="1064.7" textLength="17.7" lengthAdjust="spacingAndGlyphs" font-family="Liberation Mono" font-size="21" fill="#dadada" stroke="#dadada" stroke-width="0.2">O2</text>
<text x="94" y="1064.7" textLength="17.7" lengthAdjust="spacingAndGlyphs" font-family="Liberation Mono" font-size="21" fill="#dadada" stroke="#dadada" stroke-width="0.2">O4</text>
<text x="106" y="1064.7" textLength="17.7" lengthAdjust="spacingAndGlyphs" font-family="Liberation Mono" font-size="21" fill="#dadada" stroke="#dadada" stroke-width="0.2">O5</text>
<text x="119" y="1064.7" textLength="17.7" lengthAdjust="spacingAndGlyphs" font-family="Liberation Mono" font-size="21" fill="#dadada" stroke="#dadada" stroke-width="0.2">O6</text>
<text x="168.6" y="1064.7" textLength="17.7" lengthAdjust="spacingAndGlyphs" font-family="Liberation Mono" font-size="21" fill="#dadada" stroke="#dadada" stroke-width="0.2">O9</text>
<text x="266.4" y="1064.7" textLength="17.7" lengthAdjust="spacingAndGlyphs" font-family="Liberation Mono" font-size="21" fill="#dadada" stroke="#dadada" stroke-width="0.2">1O</text>
<text x="361.6" y="1064.7" textLength="17.7" lengthAdjust="spacingAndGlyphs" font-family="Liberation Mono" font-size="21" fill="#dadada" stroke="#dadada" stroke-width="0.2">11</text>
<text x="452.2" y="1064.7" textLength="17.7" lengthAdjust="spacingAndGlyphs" font-family="Liberation Mono" font-size="21" fill="#dadada" stroke="#dadada" stroke-width="0.2">12</text>
<text x="549" y="1064.7" textLength="17.7" lengthAdjust="spacingAndGlyphs" font-family="Liberation Mono" font-size="21" fill="#dadada" stroke="#dadada" stroke-width="0.2">13</text>
<text x="644.3" y="1064.7" textLength="17.7" lengthAdjust="spacingAndGlyphs" font-family="Liberation Mono" font-size="21" fill="#dadada" stroke="#dadada" stroke-width="0.2">14</text>
<text x="714.2" y="1064.7" textLength="17.7" lengthAdjust="spacingAndGlyphs" font-family="Liberation Mono" font-size="21" fill="#dadada" stroke="#dadada" stroke-width="0.2">15</text>
<text x="758.3" y="1064.7" textLength="17.7" lengthAdjust="spacingAndGlyphs" font-family="Liberation Mono" font-size="21" fill="#dadada" stroke="#dadada" stroke-width="0.2">16</text>
<text x="805.2" y="1064.7" textLength="17.7" lengthAdjust="spacingAndGlyphs" font-family="Liberation Mono" font-size="21" fill="#dadada" stroke="#dadada" stroke-width="0.2">17</text>
<text x="900.5" y="1064.7" textLength="17.7" lengthAdjust="spacingAndGlyphs" font-family="Liberation Mono" font-size="21" fill="#dadada" stroke="#dadada" stroke-width="0.2">18</text>
<text x="994.4" y="1064.7" textLength="17.7" lengthAdjust="spacingAndGlyphs" font-family="Liberation Mono" font-size="21" fill="#dadada" stroke="#dadada" stroke-width="0.2">19</text>
<text x="1091.1" y="1064.7" textLength="17.7" lengthAdjust="spacingAndGlyphs" font-family="Liberation Mono" font-size="21" fill="#dadada" stroke="#dadada" stroke-width="0.2">2O</text>
<text x="1186.4" y="1064.7" textLength="17.7" lengthAdjust="spacingAndGlyphs" font-family="Liberation Mono" font-size="21" fill="#dadada" stroke="#dadada" stroke-width="0.2">21</text>
<text x="1283.2" y="1064.7" textLength="17.7" lengthAdjust="spacingAndGlyphs" font-family="Liberation Mono" font-size="21" fill="#dadada" stroke="#dadada" stroke-width="0.2">22</text>
<text x="1378.3" y="1064.7" textLength="17.7" lengthAdjust="spacingAndGlyphs" font-family="Liberation Mono" font-size="21" fill="#dadada" stroke="#dadada" stroke-width="0.2">23</text>
<text x="1473.7" y="1064.7" textLength="17.7" lengthAdjust="spacingAndGlyphs" font-family="Liberation Mono" font-size="21" fill="#dadada" stroke="#dadada" stroke-width="0.2">OO</text>
<text x="1570.3" y="1064.7" textLength="17.7" lengthAdjust="spacingAndGlyphs" font-family="Liberation Mono" font-size="21" fill="#dadada" stroke="#dadada" stroke-width="0.2">O1</text>
<text x="1661.2" y="1064.7" textLength="17.7" lengthAdjust="spacingAndGlyphs" font-family="Liberation Mono" font-size="21" fill="#dadada" stroke="#dadada" stroke-width="0.2">O2</text>
<text x="1737.5" y="1064.7" textLength="17.7" lengthAdjust="spacingAndGlyphs" font-family="Liberation Mono" font-size="21" fill="#dadada" stroke="#dadada" stroke-width="0.2">O3</text>
<text x="1801.9" y="1064.7" textLength="17.7" lengthAdjust="spacingAndGlyphs" font-family="Liberation Mono" font-size="21" fill="#dadada" stroke="#dadada" stroke-width="0.2">O4</text>
<text x="1878.2" y="1064.7" textLength="17.7" lengthAdjust="spacingAndGlyphs" font-family="Liberation Mono" font-size="21" fill="#dadada" stroke="#dadada" stroke-width="0.2">O5</text>
<text x="1904.5" y="1064.7" textLength="17.7" lengthAdjust="spacingAndGlyphs" font-family="Liberation Mono" font-size="21" fill="#dadada" stroke="#dadada" stroke-width="0.2">O6</text>
<text x="1473.7" y="1040.5" textLength="17.7" lengthAdjust="spacingAndGlyphs" font-family="Liberation Mono" font-size="21" fill="#d6d6d6">22</text>
<text x="1933.6" y="883.2" textLength="46.7" lengthAdjust="spacingAndGlyphs" font-family="Liberation Mono" font-size="21" fill="#d6d6d6">3,975</text>
<text x="1933.6" y="953.5" textLength="46.7" lengthAdjust="spacingAndGlyphs" font-family="Liberation Mono" font-size="21" fill="#d6d6d6">3,95O</text>
<text x="1933.6" y="1023.8" textLength="46.7" lengthAdjust="spacingAndGlyphs" font-family="Liberation Mono" font-size="21" fill="#d6d6d6">3,925</text>
<rect x="1931.5" y="890.5" width="92.8" height="33.3" fill="#d4d4d4"/>
<text x="1951.8" y="911.5" textLength="49.5" lengthAdjust="spacingAndGlyphs" font-family="Liberation Mono" font-size="21" font-weight="bold" fill="#000">3,968</text>
<text x="12.5" y="851" textLength="9.6" lengthAdjust="spacingAndGlyphs" font-family="Liberation Mono" font-size="21.5" font-weight="normal" fill="#dedede">[</text>
<path transform="translate(23.3,835) scale(1.055,1.031)" d="M8,0.8 L1,6.8 M8,0.8 L15,6.8 M4.5,6.5 H11.5 M2.5,9.8 H13.5 M1,15 H15 M8,6.5 V15 M4.5,11.3 L5.8,13.6 M11.5,11.3 L10.2,13.6" fill="none" stroke="#dedede" stroke-width="1.45" stroke-linecap="square"/>
<text x="51.1" y="851" textLength="106" lengthAdjust="spacingAndGlyphs" font-family="Liberation Mono" font-size="21.5" font-weight="normal" fill="#dedede">23/O4 8,O2O</text>
<path d="M161.1,838.5 L171.9,849.5 M171.9,838.5 L161.1,849.5" stroke="#dedede" stroke-width="1.4" fill="none"/>
<text x="176.4" y="851" textLength="48.2" lengthAdjust="spacingAndGlyphs" font-family="Liberation Mono" font-size="21.5" font-weight="normal" fill="#dedede">1.OO]</text>
<path d="M228.6,843.5 H238.4" stroke="#dedede" stroke-width="1.6" fill="none"/>
<text x="243.9" y="851" textLength="9.6" lengthAdjust="spacingAndGlyphs" font-family="Liberation Mono" font-size="21.5" font-weight="normal" fill="#dedede">[</text>
<path transform="translate(254.7,835) scale(1.055,1.031)" d="M8.5,0.5 L6.5,3 M3,3 H13 V15.5 H3 Z M3,9 H13" fill="none" stroke="#dedede" stroke-width="1.45" stroke-linecap="square"/>
<path transform="translate(274,835) scale(1.055,1.031)" d="M8,0.8 L1,6.8 M8,0.8 L15,6.8 M4.5,6.5 H11.5 M2.5,9.8 H13.5 M1,15 H15 M8,6.5 V15 M4.5,11.3 L5.8,13.6 M11.5,11.3 L10.2,13.6" fill="none" stroke="#dedede" stroke-width="1.45" stroke-linecap="square"/>
<text x="301.7" y="851" textLength="106" lengthAdjust="spacingAndGlyphs" font-family="Liberation Mono" font-size="21.5" font-weight="normal" fill="#dedede">23/O4 4,O52</text>
<path d="M411.7,838.5 L422.5,849.5 M422.5,838.5 L411.7,849.5" stroke="#dedede" stroke-width="1.4" fill="none"/>
<text x="427" y="851" textLength="48.2" lengthAdjust="spacingAndGlyphs" font-family="Liberation Mono" font-size="21.5" font-weight="normal" fill="#dedede">1.OO]</text>
<path transform="translate(486.1,835) scale(1.055,1.031)" d="M4,0.8 L1,5.5 L6.5,5.5 M6,3.5 L1,10.5 H7 M4,10.5 V16 M1.3,13 L0.5,15.5 M6.5,13 L7.5,15.5 M11,0.8 L8.5,5.5 M10,3 H15 L9,10 M10.5,5.5 L16,9.5 M11,11 L13.5,12.3 M10,13.5 L14.5,15.5" fill="none" stroke="#dedede" stroke-width="1.45" stroke-linecap="square"/>
<path transform="translate(505.3,835) scale(1.055,1.031)" d="M4.5,0.8 L1,7 M3,5 V16 M7,3 H16 M11.5,0.8 V4.5 M8.5,5 H14.5 V13 H8.5 Z M8.5,7.7 H14.5 M8.5,10.3 H14.5 M6.5,5 V15.5 H16" fill="none" stroke="#dedede" stroke-width="1.45" stroke-linecap="square"/>
<path transform="translate(534.3,835) scale(1.055,1.031)" d="M1,2.5 H6 V13 H1 Z M1,7.8 H6 M8,3.5 H15.5 M11.8,1 V6 M8,6 H15.5 M7.5,9 H16 M13.5,7 V14.5 Q13.5,16 11.5,15.5 M9.3,11 L10.5,13" fill="none" stroke="#dedede" stroke-width="1.45" stroke-linecap="square"/>
<path transform="translate(553.5,835) scale(1.055,1.031)" d="M5,0.5 V2 M1,2.5 H10 M5,3 L2,7 M2,7 H8 L2.5,12.5 M5.5,10 L9,13.5 M8,4.5 L3,10 M12,2.5 V12 M15,0.8 V14.5 Q15,16 13,15.5" fill="none" stroke="#dedede" stroke-width="1.45" stroke-linecap="square"/>
<text x="571.6" y="851" textLength="115.7" lengthAdjust="spacingAndGlyphs" font-family="Liberation Mono" font-size="21.5" font-weight="normal" fill="#dedede">:O6:OO 3,968</text>
</svg>
</body></html>
